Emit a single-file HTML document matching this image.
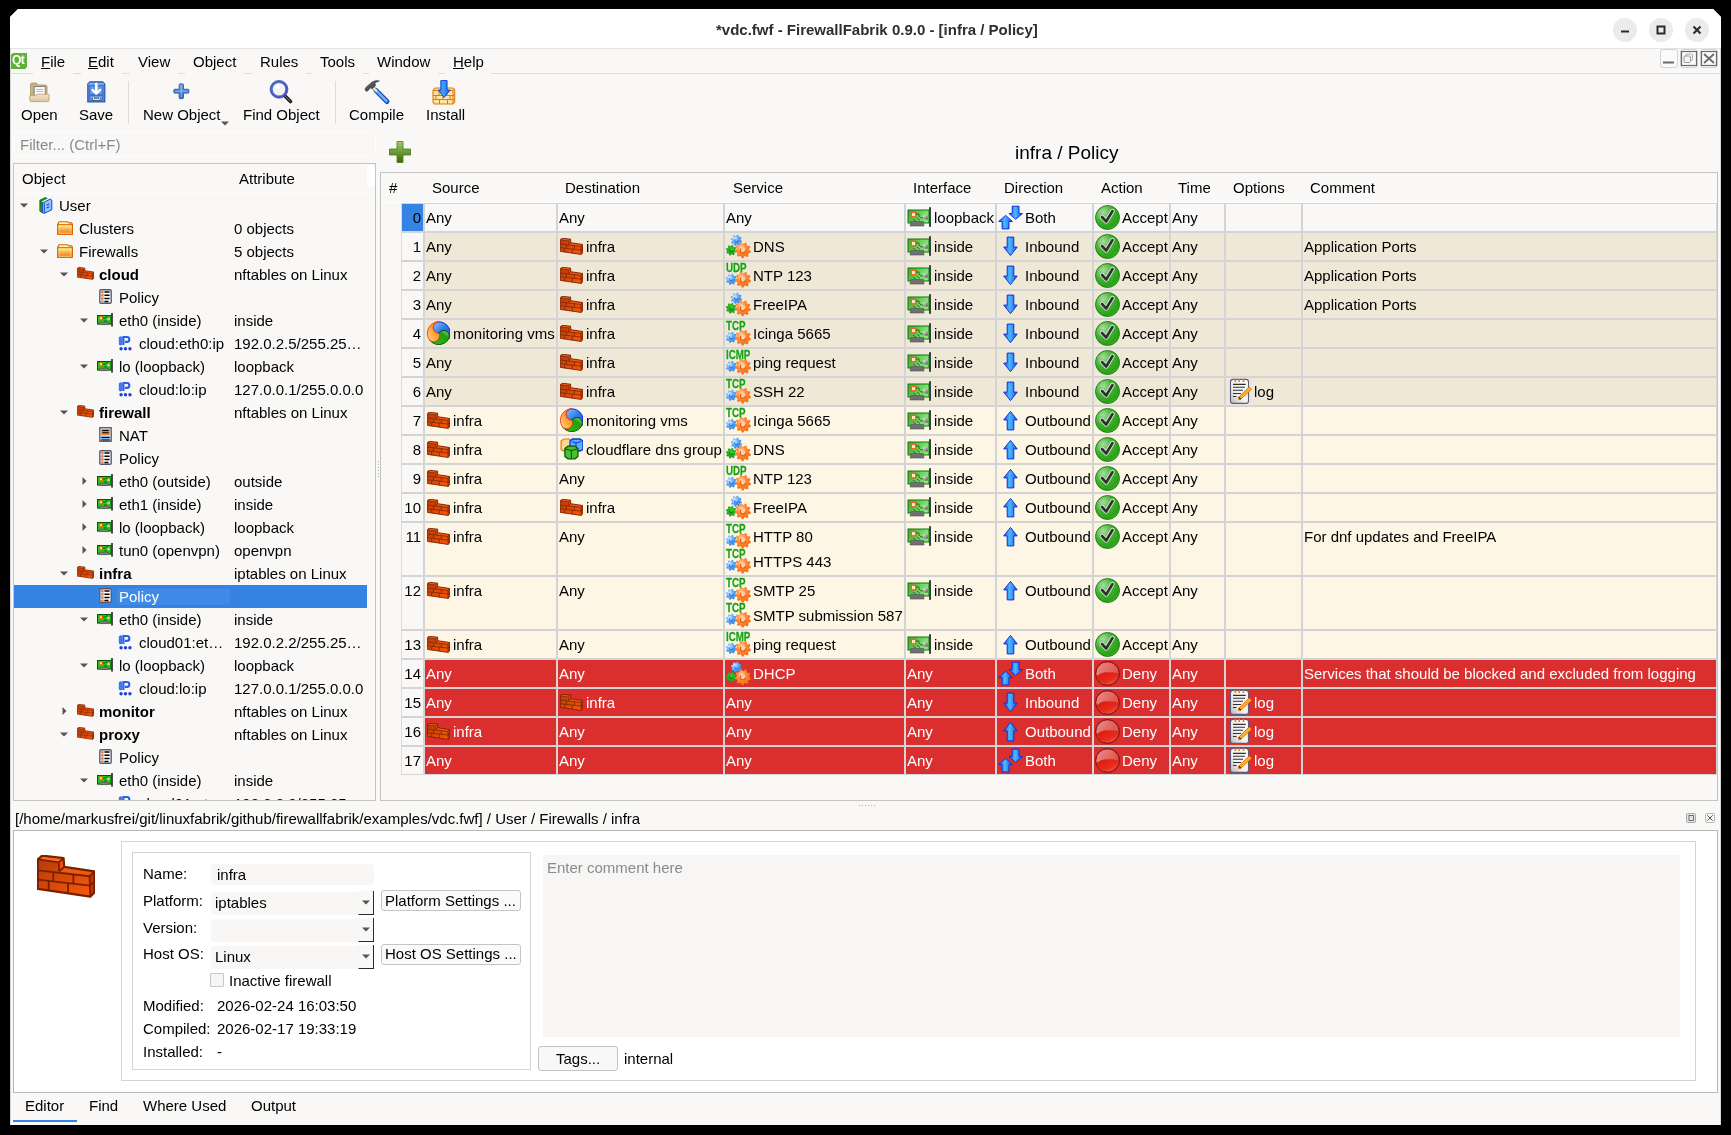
<!DOCTYPE html>
<html><head><meta charset="utf-8"><title>FirewallFabrik</title>
<style>
*{box-sizing:border-box}
html,body{margin:0;padding:0;width:1731px;height:1135px;overflow:hidden;background:#000;font-family:"Liberation Sans", sans-serif;font-size:15px;color:#000}
.a{position:absolute}
.t{position:absolute;white-space:nowrap;line-height:17px}
.b{font-weight:bold}
#win{position:absolute;left:10px;top:9px;width:1711px;height:1116px;background:#f9f8f7;clip-path:polygon(8px 0,calc(100% - 8px) 0,100% 8px,100% 100%,0 100%,0 8px)}
svg{position:absolute;overflow:visible}
</style></head>
<body>
<div id="root" style="position:absolute;left:0;top:0;width:1731px;height:1135px;will-change:transform">
<svg width="0" height="0" style="position:absolute">
<defs>
<linearGradient id="gBrick" x1="0" y1="0" x2="1" y2="1"><stop offset="0" stop-color="#b03a08"/><stop offset="1" stop-color="#ff5a08"/></linearGradient>
<linearGradient id="gGreenPlus" x1="0" y1="0" x2="0" y2="1"><stop offset="0" stop-color="#9ccc6a"/><stop offset="1" stop-color="#3a6a08"/></linearGradient>
<radialGradient id="gAccept" cx="0.32" cy="0.28" r="0.85"><stop offset="0" stop-color="#a8dca0"/><stop offset="0.45" stop-color="#42b232"/><stop offset="0.8" stop-color="#2aa018"/><stop offset="1" stop-color="#5ad040"/></radialGradient>
<linearGradient id="gDenyTop" x1="0" y1="0" x2="1" y2="0.6"><stop offset="0" stop-color="#e89090"/><stop offset="1" stop-color="#e04a40"/></linearGradient><linearGradient id="gDenyBot" x1="0" y1="0" x2="1" y2="1"><stop offset="0" stop-color="#d81810"/><stop offset="0.6" stop-color="#e82a1a"/><stop offset="1" stop-color="#ff6050"/></linearGradient>
<linearGradient id="gFolder" x1="0" y1="0" x2="0" y2="1"><stop offset="0" stop-color="#fff890"/><stop offset="0.45" stop-color="#f6b850"/><stop offset="0.8" stop-color="#f08a20"/><stop offset="1" stop-color="#f8c878"/></linearGradient>
<linearGradient id="gArrow" x1="0" y1="0" x2="1" y2="0"><stop offset="0" stop-color="#1a5ae8"/><stop offset="0.45" stop-color="#4ab8ff"/><stop offset="1" stop-color="#1a50e0"/></linearGradient>
<linearGradient id="gCard" x1="0" y1="0" x2="1" y2="0.3"><stop offset="0" stop-color="#3aa83a"/><stop offset="1" stop-color="#8ae878"/></linearGradient>
<linearGradient id="gChip" x1="0" y1="0" x2="1" y2="1"><stop offset="0" stop-color="#f0f0f0"/><stop offset="1" stop-color="#505050"/></linearGradient>
<radialGradient id="gGearO" cx="0.4" cy="0.35" r="0.7"><stop offset="0" stop-color="#ffe0c0"/><stop offset="0.4" stop-color="#ff8a3a"/><stop offset="1" stop-color="#f06a10"/></radialGradient>
<radialGradient id="gGearB" cx="0.35" cy="0.35" r="0.7"><stop offset="0" stop-color="#d8ecff"/><stop offset="0.5" stop-color="#5aaaf8"/><stop offset="1" stop-color="#2a7ae8"/></radialGradient>
<radialGradient id="gGearG" cx="0.5" cy="0.4" r="0.7"><stop offset="0" stop-color="#40d030"/><stop offset="1" stop-color="#108a10"/></radialGradient>
<linearGradient id="gSwB" x1="0" y1="0" x2="1" y2="1"><stop offset="0" stop-color="#90c0ff"/><stop offset="0.5" stop-color="#2a80e8"/><stop offset="1" stop-color="#1a50d8"/></linearGradient><linearGradient id="gSwG" x1="0" y1="1" x2="1" y2="0"><stop offset="0" stop-color="#30c010"/><stop offset="0.7" stop-color="#20a010"/><stop offset="1" stop-color="#90e080"/></linearGradient><linearGradient id="gSwO" x1="0" y1="1" x2="1" y2="0"><stop offset="0" stop-color="#ffe0a0"/><stop offset="0.5" stop-color="#ffa030"/><stop offset="1" stop-color="#ff8a20"/></linearGradient>
<linearGradient id="gLibG" x1="0" y1="0" x2="1" y2="1"><stop offset="0" stop-color="#0a7a0a"/><stop offset="1" stop-color="#40d020"/></linearGradient>
<linearGradient id="gPad" x1="1" y1="0" x2="0" y2="1"><stop offset="0" stop-color="#ffffff"/><stop offset="0.6" stop-color="#f0f0f0"/><stop offset="1" stop-color="#b8b8b8"/></linearGradient>

<symbol id="fw" viewBox="0 0 58 43">
 <path d="M0.8 4.3 L5.2 0.6 L26.6 3 L27.2 11.9 L57.3 16.4 L57.4 37.6 L53.3 41.6 L0.8 33.9 Z" fill="url(#gBrick)"/>
 <path d="M2 4.6 L5.6 1.6 L25.2 3.8 L21.6 7.4 Z" fill="#ff6a1a"/>
 <path d="M27.5 12.3 L56 16.6 L52.2 20.8 L23.5 16.5 Z" fill="#f05a10"/>
 <path d="M21.8 7.6 L26.4 3.4 L26.9 12 L22.4 16.2 Z" fill="#f05010"/>
 <path d="M52.6 21.2 L56.9 17 L57 37.3 L53 41.2 Z" fill="#c03a06"/>
 <path d="M0.8 4.3 L5.2 0.6 L26.6 3 L27.2 11.9 L57.3 16.4 L57.4 37.6 L53.3 41.6 L0.8 33.9 Z" fill="none" stroke="#7a2000" stroke-width="2.2" stroke-linejoin="round"/>
 <path d="M0.8 4.3 L21.8 7.4 L26.6 3 M21.8 7.4 L22.2 16.3 M0.8 15.3 L52.6 21.2 L57.3 16.4 M22.2 16.3 L27.2 11.9 M52.6 21.2 L53.3 41.6 M0.8 24.6 L53 30.6 L57.3 26.4 M16.3 17.2 L16.3 25.8 M36.4 19.3 L36.4 28.2 M11.7 25.8 L11.7 35.5 M31 27.5 L31 38.2" fill="none" stroke="#7a2000" stroke-width="1.8"/>
</symbol>

<symbol id="gplus" viewBox="0 0 22 22">
 <path d="M8 0.5 H14 V8 H21.5 V14 H14 V21.5 H8 V14 H0.5 V8 H8 Z" fill="url(#gGreenPlus)" stroke="#4a7a16" stroke-width="0.8"/>
</symbol>

<symbol id="accept" viewBox="0 0 25 25">
 <circle cx="12.5" cy="12.5" r="12" fill="url(#gAccept)" stroke="#1b7a10" stroke-width="0.9"/>
 <path d="M7 12 L11.2 16.5 L17.5 6" fill="none" stroke="#fff" stroke-opacity="0.75" stroke-width="4.4" stroke-linecap="round" stroke-linejoin="round"/>
 <path d="M7 12 L11.2 16.5 L17.5 6" fill="none" stroke="#303030" stroke-width="2.6" stroke-linecap="round" stroke-linejoin="round"/>
</symbol>

<symbol id="deny" viewBox="0 0 25 25">
 <circle cx="12.5" cy="12.5" r="11.9" fill="url(#gDenyTop)" stroke="#8a1818" stroke-width="1"/>
 <path d="M1.4 15.5 Q6 11 12.5 11.2 Q19 11.2 24.3 12.2 A11.9 11.9 0 0 1 1.4 15.5 Z" fill="url(#gDenyBot)"/>
 <circle cx="12.5" cy="12.5" r="11.9" fill="none" stroke="#8a1818" stroke-width="1"/>
</symbol>

<symbol id="down" viewBox="0 0 25 27">
 <path d="M10.2 4.1 H16.8 V14.1 H20.2 L13.5 22.6 L6.7 14.1 H10.2 Z" fill="url(#gArrow)" stroke="#1030d8" stroke-width="1" stroke-linejoin="round"/>
</symbol>
<symbol id="up" viewBox="0 0 25 27">
 <path d="M10.2 22.9 H16.8 V12.9 H20.2 L13.5 4.4 L6.7 12.9 H10.2 Z" fill="url(#gArrow)" stroke="#1030d8" stroke-width="1" stroke-linejoin="round"/>
</symbol>
<symbol id="both" viewBox="0 0 27 27">
 <path d="M15.2 2.2 H22 V9.5 H25.5 L18.6 15.3 L12 9.5 H15.2 Z" fill="url(#gArrow)" stroke="#1030d8" stroke-width="1" stroke-linejoin="round"/>
 <path d="M5.1 24.9 H12 V17.5 H15.4 L8.6 11.4 L1.7 17.5 H5.1 Z" fill="url(#gArrow)" stroke="#1030d8" stroke-width="1" stroke-linejoin="round"/>
</symbol>

<symbol id="iface" viewBox="0 0 26 22">
 <rect x="2" y="4" width="21" height="13" fill="url(#gCard)" stroke="#0a7a0a" stroke-width="1"/>
 <rect x="5.3" y="6.3" width="4.5" height="4.5" fill="#ffe8c0" stroke="#f06010" stroke-width="1.3"/>
 <path d="M9.8 8 H13 V10 L15 12 H17.5 M7 13 L10 15 M11 12 L14 14.5" stroke="#1a6a1a" fill="none" stroke-width="0.9"/>
 <rect x="17.3" y="9.2" width="4.5" height="4.4" fill="url(#gChip)"/>
 <path d="M5 15.5 H17.5 L18 20 H4 Z" fill="#707070" stroke="#505050" stroke-width="0.6"/>
 <rect x="23" y="1.2" width="2" height="19.6" fill="#3a4048"/>
</symbol>

<symbol id="iface_s" viewBox="0 0 16 14">
 <rect x="0.5" y="2.5" width="13.6" height="8.6" fill="#2ac212" stroke="#005800" stroke-width="1"/>
 <circle cx="4" cy="5.2" r="1.7" fill="#ffe070" stroke="#ff5a10" stroke-width="1"/>
 <path d="M5.6 5.2 H8 L9 4 H11 M7 8 H10" stroke="#0a5a0a" stroke-width="0.8" fill="none"/>
 <rect x="10.3" y="4.8" width="2.4" height="2.4" fill="#d8c0e0"/>
 <rect x="2.3" y="9.3" width="9.4" height="2.3" rx="1" fill="#808080" stroke="#444" stroke-width="0.5"/>
 <rect x="14.1" y="0" width="1.8" height="13.6" fill="#3a3a3a"/>
</symbol>
<symbol id="ip" viewBox="0 0 16 18">
 <rect x="1" y="2" width="2.8" height="9.2" rx="1.2" fill="#3a80f0" stroke="#1a40d8" stroke-width="0.7"/>
 <path d="M5.6 11.2 V2.3 H9.5 Q12.3 2.3 12.3 5 Q12.3 7.8 9.5 7.8 H7.3" fill="none" stroke="#2a60e8" stroke-width="2.4"/>
 <circle cx="3" cy="15.5" r="1.9" fill="#1a40d8"/><circle cx="8" cy="15.5" r="1.9" fill="#1a40d8"/><circle cx="13" cy="15.5" r="1.9" fill="#1a40d8"/>
</symbol>

<symbol id="policy" viewBox="0 0 12 14">
 <rect x="0.7" y="0.7" width="10.6" height="12.6" rx="1" fill="#fff" stroke="#5a5670" stroke-width="1.3"/>
 <rect x="2" y="2" width="2.5" height="10" fill="#b8dcff"/>
 <rect x="2" y="2" width="2" height="1.8" fill="#ff6a00"/><rect x="2" y="5" width="2" height="1.8" fill="#ff6a00"/><rect x="2" y="8" width="2" height="1.8" fill="#ff6a00"/><rect x="2" y="11" width="2" height="1.2" fill="#ff6a00"/>
 <path d="M5 2.8 H9.8 M5 5.8 H9.8 M5 8.8 H9.8 M5 11.6 H8.8" stroke="#000" stroke-width="1.3"/>
</symbol>
<symbol id="nat" viewBox="0 0 12 14">
 <rect x="0.7" y="0.7" width="10.6" height="12.6" fill="#fff" stroke="#5a5670" stroke-width="1.3"/>
 <rect x="2" y="2" width="8" height="5.6" fill="#f08a10"/>
 <path d="M3 3.3 H9 M3 5.3 H9" stroke="#000" stroke-width="1"/>
 <path d="M2 8.6 H10" stroke="#4aa0f0" stroke-width="1"/><path d="M2 9.8 H10 M2 12 H10" stroke="#000" stroke-width="1"/><path d="M2 11 H10" stroke="#4aa0f0" stroke-width="1"/>
</symbol>

<symbol id="folder" viewBox="0 0 16 14">
 <path d="M1 3 L2 0.8 H10.6 L11.8 1.9 H14.6 L15.4 3 V13.3 H0.6 V3 Z" fill="#fff6b0" stroke="#e06000" stroke-width="1.1" stroke-linejoin="round"/>
 <rect x="0.7" y="3.7" width="14.6" height="9.6" fill="url(#gFolder)" stroke="#e06000" stroke-width="1.1"/>
 <rect x="2" y="5" width="12" height="7.2" fill="none" stroke="#fff0b0" stroke-opacity="0.6" stroke-width="0.8"/>
</symbol>

<symbol id="lib" viewBox="0 0 14 17">
 <path d="M0.9 3.2 L6.8 0.4 L9 2.5 L9 13 L3.5 15.8 L0.9 14.2 Z" fill="url(#gLibG)" stroke="#0a6a0a" stroke-width="0.9"/>
 <path d="M2.6 4.4 L8.4 1.7 L10.6 2.6 L4.8 5.6 Z" fill="#fff"/>
 <path d="M3.6 5.9 L11.4 2 L12.8 3.2 L12.8 12.8 L5.2 16.4 L3.6 15.4 Z" fill="#8ec8f8" stroke="#1a44d0" stroke-width="1"/>
 <path d="M5.4 6.2 V16" stroke="#1a44d0" stroke-width="0.9"/>
 <path d="M7.6 8.2 L10.2 6.9 M7.6 11 L10.3 9.7" stroke="#1a44d0" stroke-width="1.1"/>
</symbol>

<symbol id="gears" viewBox="0 0 25 25">
 <path d="M14.70 6.20 L15.87 6.81 L15.47 8.34 L14.16 8.32 L13.41 9.31 L13.80 10.57 L12.44 11.37 L11.53 10.43 L10.30 10.60 L9.69 11.77 L8.16 11.37 L8.18 10.06 L7.19 9.31 L5.93 9.70 L5.13 8.34 L6.07 7.43 L5.90 6.20 L4.73 5.59 L5.13 4.06 L6.44 4.08 L7.19 3.09 L6.80 1.83 L8.16 1.03 L9.07 1.97 L10.30 1.80 L10.91 0.63 L12.44 1.03 L12.42 2.34 L13.41 3.09 L14.67 2.70 L15.47 4.06 L14.53 4.97Z" fill="url(#gGearB)"/>
 <circle cx="10.3" cy="6.2" r="1.7" fill="none" stroke="#1a5ad0" stroke-width="0.9" stroke-dasharray="6 4"/>
 <path d="M9.50 16.20 L10.57 16.79 L10.19 18.27 L8.97 18.27 L8.24 19.24 L8.58 20.41 L7.27 21.19 L6.40 20.33 L5.20 20.50 L4.61 21.57 L3.13 21.19 L3.13 19.97 L2.16 19.24 L0.99 19.58 L0.21 18.27 L1.07 17.40 L0.90 16.20 L-0.17 15.61 L0.21 14.13 L1.43 14.13 L2.16 13.16 L1.82 11.99 L3.13 11.21 L4.00 12.07 L5.20 11.90 L5.79 10.83 L7.27 11.21 L7.27 12.43 L8.24 13.16 L9.41 12.82 L10.19 14.13 L9.33 15.00Z" fill="url(#gGearG)"/>
 <circle cx="5.2" cy="16.2" r="1.6" fill="none" stroke="#0a6a0a" stroke-width="0.9" stroke-dasharray="6 4"/>
 <path d="M23.40 16.20 L24.86 16.98 L24.42 18.94 L22.76 19.01 L21.88 20.38 L22.50 21.92 L20.90 23.13 L19.59 22.12 L18.03 22.60 L17.51 24.18 L15.51 24.08 L15.15 22.46 L13.65 21.83 L12.24 22.70 L10.77 21.34 L11.54 19.87 L10.79 18.42 L9.15 18.19 L8.90 16.20 L10.43 15.57 L10.79 13.98 L9.69 12.74 L10.77 11.06 L12.35 11.56 L13.65 10.57 L13.60 8.91 L15.51 8.32 L16.40 9.72 L18.03 9.80 L19.05 8.49 L20.90 9.27 L20.68 10.91 L21.88 12.02 L23.50 11.68 L24.42 13.46 L23.20 14.58Z" fill="url(#gGearO)"/>
 <circle cx="16.9" cy="16.2" r="2.6" fill="#ffd0a0" stroke="#e85a10" stroke-width="1.1" stroke-dasharray="10 6"/>
</symbol>
<symbol id="proto" viewBox="0 0 25 25">
 <path d="M9.60 16.30 L10.67 16.90 L10.28 18.40 L9.06 18.42 L8.31 19.41 L8.64 20.59 L7.30 21.38 L6.43 20.53 L5.20 20.70 L4.60 21.77 L3.10 21.38 L3.08 20.16 L2.09 19.41 L0.91 19.74 L0.12 18.40 L0.97 17.53 L0.80 16.30 L-0.27 15.70 L0.12 14.20 L1.34 14.18 L2.09 13.19 L1.76 12.01 L3.10 11.22 L3.97 12.07 L5.20 11.90 L5.80 10.83 L7.30 11.22 L7.32 12.44 L8.31 13.19 L9.49 12.86 L10.28 14.20 L9.43 15.07Z" fill="url(#gGearB)"/>
 <circle cx="5.2" cy="16.3" r="1.7" fill="none" stroke="#1a5ad0" stroke-width="0.9" stroke-dasharray="6 4"/>
 <path d="M23.50 16.60 L24.96 17.38 L24.52 19.34 L22.86 19.41 L21.98 20.78 L22.60 22.32 L21.00 23.53 L19.69 22.52 L18.13 23.00 L17.61 24.58 L15.61 24.48 L15.25 22.86 L13.75 22.23 L12.34 23.10 L10.87 21.74 L11.64 20.27 L10.89 18.82 L9.25 18.59 L9.00 16.60 L10.53 15.97 L10.89 14.38 L9.79 13.14 L10.87 11.46 L12.45 11.96 L13.75 10.97 L13.70 9.31 L15.61 8.72 L16.50 10.12 L18.13 10.20 L19.15 8.89 L21.00 9.67 L20.78 11.31 L21.98 12.42 L23.60 12.08 L24.52 13.86 L23.30 14.98Z" fill="url(#gGearO)"/>
 <circle cx="17" cy="16.6" r="2.6" fill="#ffd0a0" stroke="#e85a10" stroke-width="1.1" stroke-dasharray="10 6"/>
</symbol>

<symbol id="swirl" viewBox="0 0 25 25">
 <path d="M13.80 1.80 A11.4 11.4 0 0 1 23.67 18.90 A5.7 5.7 0 0 0 13.80 13.20 A5.7 5.7 0 0 1 13.80 1.80 Z" fill="url(#gSwB)" stroke="#1010e8" stroke-width="0.9" stroke-linejoin="round"/>
 <path d="M23.67 18.90 A11.4 11.4 0 0 1 3.93 18.90 A5.7 5.7 0 0 0 13.80 13.20 A5.7 5.7 0 0 1 23.67 18.90 Z" fill="url(#gSwG)" stroke="#064a06" stroke-width="0.9" stroke-linejoin="round"/>
 <path d="M3.93 18.90 A11.4 11.4 0 0 1 13.80 1.80 A5.7 5.7 0 0 0 13.80 13.20 A5.7 5.7 0 0 1 3.93 18.90 Z" fill="url(#gSwO)" stroke="#f03a10" stroke-width="0.9" stroke-linejoin="round"/>
</symbol>

<symbol id="cubes" viewBox="0 0 25 25">
 <path d="M3.1 5 L6 3 H11.5 L13.3 5 V13.5 L11.5 14.9 H5 L3.1 13.5 Z" fill="#ffd890" stroke="#e07a10" stroke-width="1.2"/>
 <path d="M12 5 L14.5 3 H22 L24.9 5 V13.5 L22 15 H14.5 L12 13.5 Z" fill="#5ab0f8" stroke="#1030e0" stroke-width="1.3"/>
 <path d="M14 5.5 L18 7 L23 5.5 M18 7 V14" stroke="#1030e0" stroke-width="1" fill="none"/>
 <path d="M6.9 12.5 L10 10.1 H17 L19.9 12.5 V20.5 L17 22.8 H10 L6.9 20.5 Z" fill="#4ac030" stroke="#005a00" stroke-width="1.3"/>
 <path d="M7.5 13 L13.4 14.5 L19.5 13 M13.4 14.5 V22.5" stroke="#005a00" stroke-width="1.1" fill="none"/>
</symbol>

<symbol id="log" viewBox="0 0 26 27">
 <rect x="4.5" y="1.4" width="18" height="24" rx="2.5" fill="url(#gPad)" stroke="#5a5a7a" stroke-width="1.1"/>
 <path d="M9.4 1 V4 M13.2 1 V4 M17.5 1 V4" stroke="#f07a10" stroke-width="1.6"/>
 <path d="M7 6.4 H19.8 M7 9.3 H19 M7 12.3 H17 M7 15.5 H15 M7 18.5 H10.5" stroke="#303030" stroke-width="1.1"/>
 <path d="M12.3 19.6 L23.2 8.9 L25.6 11.3 L14.6 21.4 L12.6 21.6 Z" fill="#ffb020" stroke="#e06a08" stroke-width="0.8"/>
 <path d="M13 19.3 L14.8 21.2" stroke="#222" stroke-width="1.2"/>
</symbol>

<symbol id="tri_d" viewBox="0 0 8 5"><path d="M0 0.5 H8 L4 4.5 Z" fill="#555"/></symbol>
<symbol id="tri_r" viewBox="0 0 5 8"><path d="M0.5 0 V8 L4.5 4 Z" fill="#555"/></symbol>
</defs>
</svg>

<div id="win">
</div>
<div class="a" style="left:10px;top:9px;width:1711px;height:39px;background:#fff;clip-path:polygon(8px 0,calc(100% - 8px) 0,100% 8px,100% 100%,0 100%,0 8px)"></div>
<div class="a" style="left:10px;top:48px;width:1711px;height:1px;background:#e4e4e4"></div>
<div class="t b" style="left:716px;top:21px;color:#2e2e2e">*vdc.fwf - FirewallFabrik 0.9.0 - [infra / Policy]</div>
<div class="a" style="left:1613px;top:18px;width:24px;height:24px;border-radius:12px;background:#ebebeb"></div>
<div class="a" style="left:1649px;top:18px;width:24px;height:24px;border-radius:12px;background:#ebebeb"></div>
<div class="a" style="left:1685px;top:18px;width:24px;height:24px;border-radius:12px;background:#ebebeb"></div>
<svg style="left:1617px;top:22px" width="16" height="16"><path d="M4 9.5 H12" stroke="#2a2a2a" stroke-width="2"/></svg>
<svg style="left:1653px;top:22px" width="16" height="16"><rect x="4.5" y="4.5" width="7" height="7" fill="none" stroke="#2a2a2a" stroke-width="2"/></svg>
<svg style="left:1689px;top:22px" width="16" height="16"><path d="M4.5 4.5 L11.5 11.5 M11.5 4.5 L4.5 11.5" stroke="#2a2a2a" stroke-width="2"/></svg>
<div class="a" style="left:10px;top:48px;width:1px;height:1077px;background:#d6d6d6"></div>
<div class="a" style="left:1720px;top:48px;width:1px;height:1077px;background:#d6d6d6"></div>
<div class="a" style="left:11px;top:53px;width:16px;height:16px;background:#5fb038;clip-path:polygon(2px 0,100% 0,100% 14px,14px 100%,0 100%,0 2px)"></div>
<div class="t b" style="left:12px;top:52px;color:#fff;font-size:12px;letter-spacing:-0.5px">Qt</div>
<div class="t " style="left:41px;top:53px;"><u>F</u>ile</div>
<div class="t " style="left:88px;top:53px;"><u>E</u>dit</div>
<div class="t " style="left:138px;top:53px;">View</div>
<div class="t " style="left:193px;top:53px;">Object</div>
<div class="t " style="left:260px;top:53px;">Rules</div>
<div class="t " style="left:320px;top:53px;">Tools</div>
<div class="t " style="left:377px;top:53px;">Window</div>
<div class="t " style="left:453px;top:53px;"><u>H</u>elp</div>
<div class="a" style="left:11px;top:73px;width:1709px;height:1px;background:#dedede"></div>
<div class="a" style="left:33px;top:73px;width:40px;height:1px;background:#f9f8f7"></div>
<div class="a" style="left:81px;top:73px;width:41px;height:1px;background:#f9f8f7"></div>
<div class="a" style="left:130px;top:73px;width:48px;height:1px;background:#f9f8f7"></div>
<div class="a" style="left:185px;top:73px;width:59px;height:1px;background:#f9f8f7"></div>
<div class="a" style="left:252px;top:73px;width:54px;height:1px;background:#f9f8f7"></div>
<div class="a" style="left:312px;top:73px;width:51px;height:1px;background:#f9f8f7"></div>
<div class="a" style="left:369px;top:73px;width:69px;height:1px;background:#f9f8f7"></div>
<div class="a" style="left:445px;top:73px;width:46px;height:1px;background:#f9f8f7"></div>
<div class="a" style="left:1660px;top:49px;width:18px;height:19px;border:1px solid #d4d4d4;border-radius:3px;background:#fbfbfb"></div>
<div class="a" style="left:1680px;top:49px;width:18px;height:19px;border:1px solid #d4d4d4;border-radius:3px;background:#fbfbfb"></div>
<div class="a" style="left:1700px;top:49px;width:18px;height:19px;border:1px solid #d4d4d4;border-radius:3px;background:#fbfbfb"></div>
<svg style="left:1660px;top:49px" width="18" height="19"><path d="M3 13.5 H14" stroke="#6a6a66" stroke-width="2"/></svg>
<svg style="left:1680px;top:49px" width="18" height="19"><rect x="1.5" y="2.5" width="15" height="14" fill="none" stroke="#6a6a66" stroke-width="1.2"/><rect x="6" y="5" width="6.5" height="6.5" rx="1" fill="none" stroke="#aaa" stroke-width="1"/><rect x="4" y="7" width="6.5" height="6.5" rx="1" fill="#f4f4f4" stroke="#999" stroke-width="1"/></svg>
<svg style="left:1700px;top:49px" width="18" height="19"><rect x="1.5" y="2.5" width="15" height="14" fill="none" stroke="#6a6a66" stroke-width="1.2"/><path d="M4 5 L14 14 M14 5 L4 14" stroke="#6a6a66" stroke-width="1.8"/></svg>
<svg style="left:29px;top:82px" width="21" height="21" viewBox="0 0 21 21">
<defs><linearGradient id="gOpenF" x1="0" y1="0" x2="0" y2="1"><stop offset="0" stop-color="#f4e4cc"/><stop offset="1" stop-color="#dcc49a"/></linearGradient></defs>
<path d="M1.5 18.5 V2.5 Q1.5 1 3 1 H7.5 L9 3 H16.5 Q18 3 18 4.5 V18.5 Z" fill="#c9b084" stroke="#b39a6c" stroke-width="0.9"/>
<rect x="5.2" y="4.6" width="11" height="9" fill="#fff" stroke="#7a7a7a" stroke-width="0.9"/>
<path d="M7.2 7.4 H14.2 M7.2 9.4 H14.2" stroke="#a8b0a8" stroke-width="0.9"/>
<path d="M0.8 13.6 H6.5 L8 12.2 H19.3 Q20 12.2 20 13 V18.3 Q20 19.6 18.7 19.6 H2.2 Q0.8 19.6 0.8 18.3 Z" fill="url(#gOpenF)" stroke="#c0a070" stroke-width="0.9"/>
</svg>
<svg style="left:87px;top:81px" width="19" height="22" viewBox="0 0 19 22">
<path d="M0.8 3 L3 0.8 H15.5 L17.8 3 V20.8 H0.8 Z" fill="#5a8ad8" stroke="#2a5aae" stroke-width="1.2"/>
<path d="M1.5 2.8 H17" stroke="#a8c4f0" stroke-width="1"/>
<rect x="2.8" y="5" width="13" height="8.5" fill="#6a9ae4" stroke="#3a6ac0" stroke-width="0.8"/>
<rect x="2.8" y="14.5" width="13" height="5.2" fill="#6a9ae4" stroke="#3a6ac0" stroke-width="0.8"/>
<path d="M9.3 3 V12" stroke="#fff" stroke-width="2.6" stroke-linecap="round"/>
<path d="M5.5 9 L9.3 12.6 L13.1 9" fill="none" stroke="#fff" stroke-width="2.4" stroke-linecap="round" stroke-linejoin="round"/>
<path d="M6.3 16 V18.4 H12.3 V16" fill="none" stroke="#444" stroke-width="2"/>
<path d="M6.3 16 V18.4 H12.3 V16" fill="none" stroke="#fff" stroke-width="1"/>
</svg>
<div class="a" style="left:128px;top:81px;width:1px;height:43px;background:#dcdcdc"></div>
<svg style="left:173px;top:83px" width="17" height="17" viewBox="0 0 17 17">
<defs><linearGradient id="gBPlus" x1="0" y1="0" x2="0" y2="1"><stop offset="0" stop-color="#7aaae8"/><stop offset="1" stop-color="#3a72c0"/></linearGradient></defs>
<path d="M6.2 1.6 Q6.2 0.9 7 0.9 H9.6 Q10.4 0.9 10.4 1.6 V6.3 H15.1 Q15.8 6.3 15.8 7 V9.3 Q15.8 10.1 15.1 10.1 H10.4 V14.8 Q10.4 15.6 9.6 15.6 H7 Q6.2 15.6 6.2 14.8 V10.1 H1.6 Q0.9 10.1 0.9 9.3 V7 Q0.9 6.3 1.6 6.3 H6.2 Z" fill="url(#gBPlus)" stroke="#2a5aa0" stroke-width="1"/>
<path d="M8.3 2.5 V14 M2.5 8.2 H14" stroke="#a8c8f0" stroke-width="0.8" stroke-opacity="0.7"/>
</svg>
<svg style="left:269px;top:80px" width="24" height="24" viewBox="0 0 24 24">
<defs><linearGradient id="gLens" x1="0" y1="0" x2="1" y2="1"><stop offset="0" stop-color="#4a70d0"/><stop offset="1" stop-color="#5a50c0"/></linearGradient></defs>
<path d="M15 15 L21.5 21.5" stroke="#222" stroke-width="3.6" stroke-linecap="round"/>
<path d="M15.5 15.5 L21 21" stroke="#777" stroke-width="1" stroke-linecap="round"/>
<circle cx="10" cy="9.3" r="7.6" fill="#f2f2f4" stroke="url(#gLens)" stroke-width="2.6"/>
<circle cx="10" cy="9.3" r="8.9" fill="none" stroke="#2a48a8" stroke-width="0.7"/>
<circle cx="8.5" cy="7" r="2.2" fill="#fff"/>
</svg>
<div class="a" style="left:335px;top:81px;width:1px;height:43px;background:#dcdcdc"></div>
<svg style="left:364px;top:80px" width="26" height="24" viewBox="0 0 26 24">
<defs><linearGradient id="gHead" x1="0" y1="0" x2="1" y2="1"><stop offset="0" stop-color="#707478"/><stop offset="1" stop-color="#2a2e32"/></linearGradient></defs>
<path d="M12 10.5 L23 21.5" stroke="#1a48b8" stroke-width="5" stroke-linecap="round"/>
<path d="M12.5 11 L22.6 21.1" stroke="#6ab0f8" stroke-width="2.6" stroke-linecap="round"/>
<path d="M8.5 7 L13 11.5" stroke="#888" stroke-width="3.6"/>
<path d="M8.5 7 L13 11.5" stroke="#e8e8e8" stroke-width="2"/>
<path d="M1.2 10 Q0.6 8.6 2 7.3 L8 2 Q11.5 -0.3 15.5 0.9 Q12.5 1.6 10.8 3.6 L11.8 5.2 L8.2 8.8 L6.8 7.8 L3.3 11.2 Q1.8 11.6 1.2 10 Z" fill="url(#gHead)" stroke="#333" stroke-width="0.5"/>
</svg>
<svg style="left:432px;top:80px" width="25" height="25" viewBox="0 0 25 25">
<defs><linearGradient id="gInsA" x1="0" y1="0" x2="1" y2="0"><stop offset="0" stop-color="#1a60e8"/><stop offset="0.4" stop-color="#38a8ff"/><stop offset="1" stop-color="#1a50e0"/></linearGradient></defs>
<path d="M1 10.5 L3 8 H20.5 L22.7 10.5 V22 L21 24 H2.5 L1 22 Z" fill="#fde4a0" stroke="#e07810" stroke-width="1.1"/>
<path d="M1 10.5 H21 L22.7 8.5 M1 15.5 H22.7 M1 19.5 H22.7 M7 10.5 V15.5 M15 10.5 V15.5 M4 15.5 V19.5 M11 15.5 V19.5 M18 15.5 V19.5 M7.5 19.5 V24 M15.5 19.5 V24 M21 10.5 V24" fill="none" stroke="#e07810" stroke-width="1"/>
<path d="M8.8 0.5 H15.1 V10 H18.3 L12 17.5 L6.2 10 H8.8 Z" fill="url(#gInsA)" stroke="#1a40d0" stroke-width="0.9" stroke-linejoin="round"/>
</svg>
<div class="t " style="left:21px;top:106px;">Open</div>
<div class="t " style="left:79px;top:106px;">Save</div>
<div class="t " style="left:143px;top:106px;">New Object</div>
<svg style="left:221px;top:121px" width="8" height="5"><use href="#tri_d" width="8" height="5"/></svg>
<div class="t " style="left:243px;top:106px;">Find Object</div>
<div class="t " style="left:349px;top:106px;">Compile</div>
<div class="t " style="left:426px;top:106px;">Install</div>
<div class="a" style="left:14px;top:132px;width:362px;height:25px;border:1px solid #fefefe;border-radius:5px;background:#f9f8f7"></div>
<div class="t " style="left:20px;top:136px;color:#8a8a8a">Filter... (Ctrl+F)</div>
<div class="a" style="left:13px;top:163px;width:363px;height:638px;border:1px solid #c4c4c2;background:#f9f8f7"></div>
<div class="a" style="left:367px;top:165px;width:8px;height:22px;background:#fff;border-radius:4px"></div>
<div class="a" style="left:14px;top:193px;width:353px;height:1px;background:#fff"></div>
<div class="t " style="left:22px;top:170px;">Object</div>
<div class="t " style="left:239px;top:170px;">Attribute</div>
<div class="a" style="left:14px;top:194px;width:353px;height:606px;overflow:hidden">
<svg style="left:6px;top:9px" width="8" height="5"><use href="#tri_d" width="8" height="5"/></svg>
<svg style="left:25px;top:3px" width="14" height="17"><use href="#lib" width="14" height="17"/></svg>
<div class="t" style="left:45px;top:3px;color:#000">User</div>
<svg style="left:43px;top:27px" width="16" height="14"><use href="#folder" width="16" height="14"/></svg>
<div class="t" style="left:65px;top:26px;color:#000">Clusters</div>
<div class="t" style="left:220px;top:26px">0 objects</div>
<svg style="left:26px;top:55px" width="8" height="5"><use href="#tri_d" width="8" height="5"/></svg>
<svg style="left:43px;top:50px" width="16" height="14"><use href="#folder" width="16" height="14"/></svg>
<div class="t" style="left:65px;top:49px;color:#000">Firewalls</div>
<div class="t" style="left:220px;top:49px">5 objects</div>
<svg style="left:46px;top:78px" width="8" height="5"><use href="#tri_d" width="8" height="5"/></svg>
<svg style="left:63px;top:73px" width="17" height="13"><use href="#fw" width="17" height="13"/></svg>
<div class="t b" style="left:85px;top:72px;color:#000">cloud</div>
<div class="t" style="left:220px;top:72px">nftables on Linux</div>
<svg style="left:85px;top:95px" width="13" height="15"><use href="#policy" width="13" height="15"/></svg>
<div class="t" style="left:105px;top:95px;color:#000">Policy</div>
<svg style="left:66px;top:124px" width="8" height="5"><use href="#tri_d" width="8" height="5"/></svg>
<svg style="left:83px;top:119px" width="16" height="14"><use href="#iface_s" width="16" height="14"/></svg>
<div class="t" style="left:105px;top:118px;color:#000">eth0 (inside)</div>
<div class="t" style="left:220px;top:118px">inside</div>
<svg style="left:104px;top:141px" width="15" height="16"><use href="#ip" width="15" height="16"/></svg>
<div class="t" style="left:125px;top:141px;color:#000">cloud:eth0:ip</div>
<div class="t" style="left:220px;top:141px">192.0.2.5/255.25…</div>
<svg style="left:66px;top:170px" width="8" height="5"><use href="#tri_d" width="8" height="5"/></svg>
<svg style="left:83px;top:165px" width="16" height="14"><use href="#iface_s" width="16" height="14"/></svg>
<div class="t" style="left:105px;top:164px;color:#000">lo (loopback)</div>
<div class="t" style="left:220px;top:164px">loopback</div>
<svg style="left:104px;top:187px" width="15" height="16"><use href="#ip" width="15" height="16"/></svg>
<div class="t" style="left:125px;top:187px;color:#000">cloud:lo:ip</div>
<div class="t" style="left:220px;top:187px">127.0.0.1/255.0.0.0</div>
<svg style="left:46px;top:216px" width="8" height="5"><use href="#tri_d" width="8" height="5"/></svg>
<svg style="left:63px;top:211px" width="17" height="13"><use href="#fw" width="17" height="13"/></svg>
<div class="t b" style="left:85px;top:210px;color:#000">firewall</div>
<div class="t" style="left:220px;top:210px">nftables on Linux</div>
<svg style="left:85px;top:233px" width="13" height="15"><use href="#nat" width="13" height="15"/></svg>
<div class="t" style="left:105px;top:233px;color:#000">NAT</div>
<svg style="left:85px;top:256px" width="13" height="15"><use href="#policy" width="13" height="15"/></svg>
<div class="t" style="left:105px;top:256px;color:#000">Policy</div>
<svg style="left:68px;top:283px" width="5" height="8"><use href="#tri_r" width="5" height="8"/></svg>
<svg style="left:83px;top:280px" width="16" height="14"><use href="#iface_s" width="16" height="14"/></svg>
<div class="t" style="left:105px;top:279px;color:#000">eth0 (outside)</div>
<div class="t" style="left:220px;top:279px">outside</div>
<svg style="left:68px;top:306px" width="5" height="8"><use href="#tri_r" width="5" height="8"/></svg>
<svg style="left:83px;top:303px" width="16" height="14"><use href="#iface_s" width="16" height="14"/></svg>
<div class="t" style="left:105px;top:302px;color:#000">eth1 (inside)</div>
<div class="t" style="left:220px;top:302px">inside</div>
<svg style="left:68px;top:329px" width="5" height="8"><use href="#tri_r" width="5" height="8"/></svg>
<svg style="left:83px;top:326px" width="16" height="14"><use href="#iface_s" width="16" height="14"/></svg>
<div class="t" style="left:105px;top:325px;color:#000">lo (loopback)</div>
<div class="t" style="left:220px;top:325px">loopback</div>
<svg style="left:68px;top:352px" width="5" height="8"><use href="#tri_r" width="5" height="8"/></svg>
<svg style="left:83px;top:349px" width="16" height="14"><use href="#iface_s" width="16" height="14"/></svg>
<div class="t" style="left:105px;top:348px;color:#000">tun0 (openvpn)</div>
<div class="t" style="left:220px;top:348px">openvpn</div>
<svg style="left:46px;top:377px" width="8" height="5"><use href="#tri_d" width="8" height="5"/></svg>
<svg style="left:63px;top:372px" width="17" height="13"><use href="#fw" width="17" height="13"/></svg>
<div class="t b" style="left:85px;top:371px;color:#000">infra</div>
<div class="t" style="left:220px;top:371px">iptables on Linux</div>
<div class="a" style="left:0px;top:391px;width:353px;height:23px;background:#3584e4"></div>
<div class="a" style="left:102px;top:393px;width:115px;height:19px;background:#3f8ae6;border:1px solid #3a80d8;border-radius:3px"></div>
<svg style="left:85px;top:394px" width="13" height="15"><use href="#policy" width="13" height="15"/></svg>
<div class="t" style="left:105px;top:394px;color:#fff">Policy</div>
<svg style="left:66px;top:423px" width="8" height="5"><use href="#tri_d" width="8" height="5"/></svg>
<svg style="left:83px;top:418px" width="16" height="14"><use href="#iface_s" width="16" height="14"/></svg>
<div class="t" style="left:105px;top:417px;color:#000">eth0 (inside)</div>
<div class="t" style="left:220px;top:417px">inside</div>
<svg style="left:104px;top:440px" width="15" height="16"><use href="#ip" width="15" height="16"/></svg>
<div class="t" style="left:125px;top:440px;color:#000">cloud01:et…</div>
<div class="t" style="left:220px;top:440px">192.0.2.2/255.25…</div>
<svg style="left:66px;top:469px" width="8" height="5"><use href="#tri_d" width="8" height="5"/></svg>
<svg style="left:83px;top:464px" width="16" height="14"><use href="#iface_s" width="16" height="14"/></svg>
<div class="t" style="left:105px;top:463px;color:#000">lo (loopback)</div>
<div class="t" style="left:220px;top:463px">loopback</div>
<svg style="left:104px;top:486px" width="15" height="16"><use href="#ip" width="15" height="16"/></svg>
<div class="t" style="left:125px;top:486px;color:#000">cloud:lo:ip</div>
<div class="t" style="left:220px;top:486px">127.0.0.1/255.0.0.0</div>
<svg style="left:48px;top:513px" width="5" height="8"><use href="#tri_r" width="5" height="8"/></svg>
<svg style="left:63px;top:510px" width="17" height="13"><use href="#fw" width="17" height="13"/></svg>
<div class="t b" style="left:85px;top:509px;color:#000">monitor</div>
<div class="t" style="left:220px;top:509px">nftables on Linux</div>
<svg style="left:46px;top:538px" width="8" height="5"><use href="#tri_d" width="8" height="5"/></svg>
<svg style="left:63px;top:533px" width="17" height="13"><use href="#fw" width="17" height="13"/></svg>
<div class="t b" style="left:85px;top:532px;color:#000">proxy</div>
<div class="t" style="left:220px;top:532px">nftables on Linux</div>
<svg style="left:85px;top:555px" width="13" height="15"><use href="#policy" width="13" height="15"/></svg>
<div class="t" style="left:105px;top:555px;color:#000">Policy</div>
<svg style="left:66px;top:584px" width="8" height="5"><use href="#tri_d" width="8" height="5"/></svg>
<svg style="left:83px;top:579px" width="16" height="14"><use href="#iface_s" width="16" height="14"/></svg>
<div class="t" style="left:105px;top:578px;color:#000">eth0 (inside)</div>
<div class="t" style="left:220px;top:578px">inside</div>
<svg style="left:104px;top:601px" width="15" height="16"><use href="#ip" width="15" height="16"/></svg>
<div class="t" style="left:125px;top:601px;color:#000">cloud01:et…</div>
<div class="t" style="left:220px;top:601px">192.0.2.3/255.25…</div>
</div>
<svg style="left:389px;top:141px" width="22" height="22"><use href="#gplus" width="22" height="22"/></svg>
<div class="t " style="left:1015px;top:143px;font-size:19px;line-height:20px">infra / Policy</div>
<div class="a" style="left:380px;top:172px;width:1338px;height:629px;border:1px solid #c4c4c2;background:#f9f8f7"></div>
<div class="a" style="left:381px;top:202px;width:1336px;height:1px;background:#fff"></div>
<div class="t " style="left:389px;top:179px;">#</div>
<div class="t " style="left:432px;top:179px;">Source</div>
<div class="t " style="left:565px;top:179px;">Destination</div>
<div class="t " style="left:733px;top:179px;">Service</div>
<div class="t " style="left:913px;top:179px;">Interface</div>
<div class="t " style="left:1004px;top:179px;">Direction</div>
<div class="t " style="left:1101px;top:179px;">Action</div>
<div class="t " style="left:1178px;top:179px;">Time</div>
<div class="t " style="left:1233px;top:179px;">Options</div>
<div class="t " style="left:1310px;top:179px;">Comment</div>
<div class="a" style="left:381px;top:173px;width:1336px;height:627px;overflow:hidden">
<div class="a" style="left:20px;top:31px;width:22px;height:27px;background:#f9f8f7;border-left:1px solid #dcdcdc"></div>
<div class="a" style="left:21px;top:31px;width:21px;height:27px;background:#3584e4"></div>
<div class="a" style="left:20px;top:30px;width:1316px;height:1px;background:#d4d4d4"></div>
<div class="a" style="left:44px;top:31px;width:1291px;height:27px;background:#f9f8f7"></div>
<div class="a" style="left:42px;top:31px;width:2px;height:27px;background:#d4d4d4"></div>
<div class="a" style="left:175px;top:31px;width:2px;height:27px;background:#d4d4d4"></div>
<div class="a" style="left:342px;top:31px;width:2px;height:27px;background:#d4d4d4"></div>
<div class="a" style="left:523px;top:31px;width:2px;height:27px;background:#d4d4d4"></div>
<div class="a" style="left:614px;top:31px;width:2px;height:27px;background:#d4d4d4"></div>
<div class="a" style="left:711px;top:31px;width:2px;height:27px;background:#d4d4d4"></div>
<div class="a" style="left:788px;top:31px;width:2px;height:27px;background:#d4d4d4"></div>
<div class="a" style="left:843px;top:31px;width:2px;height:27px;background:#d4d4d4"></div>
<div class="a" style="left:920px;top:31px;width:2px;height:27px;background:#d4d4d4"></div>
<div class="a" style="left:1335px;top:31px;width:1px;height:27px;background:#d4d4d4"></div>
<div class="t" style="left:21px;top:36px;width:19px;text-align:right;color:#000">0</div>
<div class="t" style="left:45px;top:36px;color:#000">Any</div>
<div class="t" style="left:178px;top:36px;color:#000">Any</div>
<div class="t" style="left:345px;top:36px;color:#000">Any</div>
<svg style="left:525px;top:33px" width="26" height="22"><use href="#iface" width="26" height="22"/></svg>
<div class="t" style="left:553px;top:36px;color:#000">loopback</div>
<svg style="left:616px;top:31px" width="27" height="27"><use href="#both" width="27" height="27"/></svg>
<div class="t" style="left:644px;top:36px;color:#000">Both</div>
<svg style="left:714px;top:32px" width="25" height="25"><use href="#accept" width="25" height="25"/></svg>
<div class="t" style="left:741px;top:36px;color:#000">Accept</div>
<div class="t" style="left:791px;top:36px;color:#000">Any</div>
<div class="a" style="left:20px;top:60px;width:22px;height:27px;background:#f9f8f7;border-left:1px solid #dcdcdc"></div>
<div class="a" style="left:20px;top:58px;width:1316px;height:2px;background:#d4d4d4"></div>
<div class="a" style="left:44px;top:60px;width:1291px;height:27px;background:#efe8d7"></div>
<div class="a" style="left:42px;top:60px;width:2px;height:27px;background:#d4d4d4"></div>
<div class="a" style="left:175px;top:60px;width:2px;height:27px;background:#d4d4d4"></div>
<div class="a" style="left:342px;top:60px;width:2px;height:27px;background:#d4d4d4"></div>
<div class="a" style="left:523px;top:60px;width:2px;height:27px;background:#d4d4d4"></div>
<div class="a" style="left:614px;top:60px;width:2px;height:27px;background:#d4d4d4"></div>
<div class="a" style="left:711px;top:60px;width:2px;height:27px;background:#d4d4d4"></div>
<div class="a" style="left:788px;top:60px;width:2px;height:27px;background:#d4d4d4"></div>
<div class="a" style="left:843px;top:60px;width:2px;height:27px;background:#d4d4d4"></div>
<div class="a" style="left:920px;top:60px;width:2px;height:27px;background:#d4d4d4"></div>
<div class="a" style="left:1335px;top:60px;width:1px;height:27px;background:#d4d4d4"></div>
<div class="t" style="left:21px;top:65px;width:19px;text-align:right;color:#000">1</div>
<div class="t" style="left:45px;top:65px;color:#000">Any</div>
<svg style="left:179px;top:65px" width="23" height="17"><use href="#fw" width="23" height="17"/></svg>
<div class="t" style="left:205px;top:65px;color:#000">infra</div>
<svg style="left:345px;top:61px" width="25" height="25"><use href="#gears" width="25" height="25"/></svg>
<div class="t" style="left:372px;top:65px;color:#000">DNS</div>
<svg style="left:525px;top:62px" width="26" height="22"><use href="#iface" width="26" height="22"/></svg>
<div class="t" style="left:553px;top:65px;color:#000">inside</div>
<svg style="left:616px;top:60px" width="25" height="27"><use href="#down" width="25" height="27"/></svg>
<div class="t" style="left:644px;top:65px;color:#000">Inbound</div>
<svg style="left:714px;top:61px" width="25" height="25"><use href="#accept" width="25" height="25"/></svg>
<div class="t" style="left:741px;top:65px;color:#000">Accept</div>
<div class="t" style="left:791px;top:65px;color:#000">Any</div>
<div class="t" style="left:923px;top:65px;color:#000">Application Ports</div>
<div class="a" style="left:20px;top:89px;width:22px;height:27px;background:#f9f8f7;border-left:1px solid #dcdcdc"></div>
<div class="a" style="left:20px;top:87px;width:1316px;height:2px;background:#d4d4d4"></div>
<div class="a" style="left:44px;top:89px;width:1291px;height:27px;background:#efe8d7"></div>
<div class="a" style="left:42px;top:89px;width:2px;height:27px;background:#d4d4d4"></div>
<div class="a" style="left:175px;top:89px;width:2px;height:27px;background:#d4d4d4"></div>
<div class="a" style="left:342px;top:89px;width:2px;height:27px;background:#d4d4d4"></div>
<div class="a" style="left:523px;top:89px;width:2px;height:27px;background:#d4d4d4"></div>
<div class="a" style="left:614px;top:89px;width:2px;height:27px;background:#d4d4d4"></div>
<div class="a" style="left:711px;top:89px;width:2px;height:27px;background:#d4d4d4"></div>
<div class="a" style="left:788px;top:89px;width:2px;height:27px;background:#d4d4d4"></div>
<div class="a" style="left:843px;top:89px;width:2px;height:27px;background:#d4d4d4"></div>
<div class="a" style="left:920px;top:89px;width:2px;height:27px;background:#d4d4d4"></div>
<div class="a" style="left:1335px;top:89px;width:1px;height:27px;background:#d4d4d4"></div>
<div class="t" style="left:21px;top:94px;width:19px;text-align:right;color:#000">2</div>
<div class="t" style="left:45px;top:94px;color:#000">Any</div>
<svg style="left:179px;top:94px" width="23" height="17"><use href="#fw" width="23" height="17"/></svg>
<div class="t" style="left:205px;top:94px;color:#000">infra</div>
<svg style="left:345px;top:90px" width="25" height="25"><use href="#proto" width="25" height="25"/></svg>
<div class="t b" style="left:345px;top:89px;font-size:12.5px;line-height:12px;color:#18a010;transform:scaleX(0.78);transform-origin:0 0;-webkit-text-stroke:0.3px #18a010;text-shadow:0 0 1px #fff,0 0 1px #fff">UDP</div>
<div class="t" style="left:372px;top:94px;color:#000">NTP 123</div>
<svg style="left:525px;top:91px" width="26" height="22"><use href="#iface" width="26" height="22"/></svg>
<div class="t" style="left:553px;top:94px;color:#000">inside</div>
<svg style="left:616px;top:89px" width="25" height="27"><use href="#down" width="25" height="27"/></svg>
<div class="t" style="left:644px;top:94px;color:#000">Inbound</div>
<svg style="left:714px;top:90px" width="25" height="25"><use href="#accept" width="25" height="25"/></svg>
<div class="t" style="left:741px;top:94px;color:#000">Accept</div>
<div class="t" style="left:791px;top:94px;color:#000">Any</div>
<div class="t" style="left:923px;top:94px;color:#000">Application Ports</div>
<div class="a" style="left:20px;top:118px;width:22px;height:27px;background:#f9f8f7;border-left:1px solid #dcdcdc"></div>
<div class="a" style="left:20px;top:116px;width:1316px;height:2px;background:#d4d4d4"></div>
<div class="a" style="left:44px;top:118px;width:1291px;height:27px;background:#efe8d7"></div>
<div class="a" style="left:42px;top:118px;width:2px;height:27px;background:#d4d4d4"></div>
<div class="a" style="left:175px;top:118px;width:2px;height:27px;background:#d4d4d4"></div>
<div class="a" style="left:342px;top:118px;width:2px;height:27px;background:#d4d4d4"></div>
<div class="a" style="left:523px;top:118px;width:2px;height:27px;background:#d4d4d4"></div>
<div class="a" style="left:614px;top:118px;width:2px;height:27px;background:#d4d4d4"></div>
<div class="a" style="left:711px;top:118px;width:2px;height:27px;background:#d4d4d4"></div>
<div class="a" style="left:788px;top:118px;width:2px;height:27px;background:#d4d4d4"></div>
<div class="a" style="left:843px;top:118px;width:2px;height:27px;background:#d4d4d4"></div>
<div class="a" style="left:920px;top:118px;width:2px;height:27px;background:#d4d4d4"></div>
<div class="a" style="left:1335px;top:118px;width:1px;height:27px;background:#d4d4d4"></div>
<div class="t" style="left:21px;top:123px;width:19px;text-align:right;color:#000">3</div>
<div class="t" style="left:45px;top:123px;color:#000">Any</div>
<svg style="left:179px;top:123px" width="23" height="17"><use href="#fw" width="23" height="17"/></svg>
<div class="t" style="left:205px;top:123px;color:#000">infra</div>
<svg style="left:345px;top:119px" width="25" height="25"><use href="#gears" width="25" height="25"/></svg>
<div class="t" style="left:372px;top:123px;color:#000">FreeIPA</div>
<svg style="left:525px;top:120px" width="26" height="22"><use href="#iface" width="26" height="22"/></svg>
<div class="t" style="left:553px;top:123px;color:#000">inside</div>
<svg style="left:616px;top:118px" width="25" height="27"><use href="#down" width="25" height="27"/></svg>
<div class="t" style="left:644px;top:123px;color:#000">Inbound</div>
<svg style="left:714px;top:119px" width="25" height="25"><use href="#accept" width="25" height="25"/></svg>
<div class="t" style="left:741px;top:123px;color:#000">Accept</div>
<div class="t" style="left:791px;top:123px;color:#000">Any</div>
<div class="t" style="left:923px;top:123px;color:#000">Application Ports</div>
<div class="a" style="left:20px;top:147px;width:22px;height:27px;background:#f9f8f7;border-left:1px solid #dcdcdc"></div>
<div class="a" style="left:20px;top:145px;width:1316px;height:2px;background:#d4d4d4"></div>
<div class="a" style="left:44px;top:147px;width:1291px;height:27px;background:#efe8d7"></div>
<div class="a" style="left:42px;top:147px;width:2px;height:27px;background:#d4d4d4"></div>
<div class="a" style="left:175px;top:147px;width:2px;height:27px;background:#d4d4d4"></div>
<div class="a" style="left:342px;top:147px;width:2px;height:27px;background:#d4d4d4"></div>
<div class="a" style="left:523px;top:147px;width:2px;height:27px;background:#d4d4d4"></div>
<div class="a" style="left:614px;top:147px;width:2px;height:27px;background:#d4d4d4"></div>
<div class="a" style="left:711px;top:147px;width:2px;height:27px;background:#d4d4d4"></div>
<div class="a" style="left:788px;top:147px;width:2px;height:27px;background:#d4d4d4"></div>
<div class="a" style="left:843px;top:147px;width:2px;height:27px;background:#d4d4d4"></div>
<div class="a" style="left:920px;top:147px;width:2px;height:27px;background:#d4d4d4"></div>
<div class="a" style="left:1335px;top:147px;width:1px;height:27px;background:#d4d4d4"></div>
<div class="t" style="left:21px;top:152px;width:19px;text-align:right;color:#000">4</div>
<svg style="left:44px;top:147px" width="25" height="25"><use href="#swirl" width="25" height="25"/></svg>
<div class="t" style="left:72px;top:152px;color:#000">monitoring vms</div>
<svg style="left:179px;top:152px" width="23" height="17"><use href="#fw" width="23" height="17"/></svg>
<div class="t" style="left:205px;top:152px;color:#000">infra</div>
<svg style="left:345px;top:148px" width="25" height="25"><use href="#proto" width="25" height="25"/></svg>
<div class="t b" style="left:345px;top:147px;font-size:12.5px;line-height:12px;color:#18a010;transform:scaleX(0.78);transform-origin:0 0;-webkit-text-stroke:0.3px #18a010;text-shadow:0 0 1px #fff,0 0 1px #fff">TCP</div>
<div class="t" style="left:372px;top:152px;color:#000">Icinga 5665</div>
<svg style="left:525px;top:149px" width="26" height="22"><use href="#iface" width="26" height="22"/></svg>
<div class="t" style="left:553px;top:152px;color:#000">inside</div>
<svg style="left:616px;top:147px" width="25" height="27"><use href="#down" width="25" height="27"/></svg>
<div class="t" style="left:644px;top:152px;color:#000">Inbound</div>
<svg style="left:714px;top:148px" width="25" height="25"><use href="#accept" width="25" height="25"/></svg>
<div class="t" style="left:741px;top:152px;color:#000">Accept</div>
<div class="t" style="left:791px;top:152px;color:#000">Any</div>
<div class="a" style="left:20px;top:176px;width:22px;height:27px;background:#f9f8f7;border-left:1px solid #dcdcdc"></div>
<div class="a" style="left:20px;top:174px;width:1316px;height:2px;background:#d4d4d4"></div>
<div class="a" style="left:44px;top:176px;width:1291px;height:27px;background:#efe8d7"></div>
<div class="a" style="left:42px;top:176px;width:2px;height:27px;background:#d4d4d4"></div>
<div class="a" style="left:175px;top:176px;width:2px;height:27px;background:#d4d4d4"></div>
<div class="a" style="left:342px;top:176px;width:2px;height:27px;background:#d4d4d4"></div>
<div class="a" style="left:523px;top:176px;width:2px;height:27px;background:#d4d4d4"></div>
<div class="a" style="left:614px;top:176px;width:2px;height:27px;background:#d4d4d4"></div>
<div class="a" style="left:711px;top:176px;width:2px;height:27px;background:#d4d4d4"></div>
<div class="a" style="left:788px;top:176px;width:2px;height:27px;background:#d4d4d4"></div>
<div class="a" style="left:843px;top:176px;width:2px;height:27px;background:#d4d4d4"></div>
<div class="a" style="left:920px;top:176px;width:2px;height:27px;background:#d4d4d4"></div>
<div class="a" style="left:1335px;top:176px;width:1px;height:27px;background:#d4d4d4"></div>
<div class="t" style="left:21px;top:181px;width:19px;text-align:right;color:#000">5</div>
<div class="t" style="left:45px;top:181px;color:#000">Any</div>
<svg style="left:179px;top:181px" width="23" height="17"><use href="#fw" width="23" height="17"/></svg>
<div class="t" style="left:205px;top:181px;color:#000">infra</div>
<svg style="left:345px;top:177px" width="25" height="25"><use href="#proto" width="25" height="25"/></svg>
<div class="t b" style="left:345px;top:176px;font-size:12.5px;line-height:12px;color:#18a010;transform:scaleX(0.78);transform-origin:0 0;-webkit-text-stroke:0.3px #18a010;text-shadow:0 0 1px #fff,0 0 1px #fff">ICMP</div>
<div class="t" style="left:372px;top:181px;color:#000">ping request</div>
<svg style="left:525px;top:178px" width="26" height="22"><use href="#iface" width="26" height="22"/></svg>
<div class="t" style="left:553px;top:181px;color:#000">inside</div>
<svg style="left:616px;top:176px" width="25" height="27"><use href="#down" width="25" height="27"/></svg>
<div class="t" style="left:644px;top:181px;color:#000">Inbound</div>
<svg style="left:714px;top:177px" width="25" height="25"><use href="#accept" width="25" height="25"/></svg>
<div class="t" style="left:741px;top:181px;color:#000">Accept</div>
<div class="t" style="left:791px;top:181px;color:#000">Any</div>
<div class="a" style="left:20px;top:205px;width:22px;height:27px;background:#f9f8f7;border-left:1px solid #dcdcdc"></div>
<div class="a" style="left:20px;top:203px;width:1316px;height:2px;background:#d4d4d4"></div>
<div class="a" style="left:44px;top:205px;width:1291px;height:27px;background:#efe8d7"></div>
<div class="a" style="left:42px;top:205px;width:2px;height:27px;background:#d4d4d4"></div>
<div class="a" style="left:175px;top:205px;width:2px;height:27px;background:#d4d4d4"></div>
<div class="a" style="left:342px;top:205px;width:2px;height:27px;background:#d4d4d4"></div>
<div class="a" style="left:523px;top:205px;width:2px;height:27px;background:#d4d4d4"></div>
<div class="a" style="left:614px;top:205px;width:2px;height:27px;background:#d4d4d4"></div>
<div class="a" style="left:711px;top:205px;width:2px;height:27px;background:#d4d4d4"></div>
<div class="a" style="left:788px;top:205px;width:2px;height:27px;background:#d4d4d4"></div>
<div class="a" style="left:843px;top:205px;width:2px;height:27px;background:#d4d4d4"></div>
<div class="a" style="left:920px;top:205px;width:2px;height:27px;background:#d4d4d4"></div>
<div class="a" style="left:1335px;top:205px;width:1px;height:27px;background:#d4d4d4"></div>
<div class="t" style="left:21px;top:210px;width:19px;text-align:right;color:#000">6</div>
<div class="t" style="left:45px;top:210px;color:#000">Any</div>
<svg style="left:179px;top:210px" width="23" height="17"><use href="#fw" width="23" height="17"/></svg>
<div class="t" style="left:205px;top:210px;color:#000">infra</div>
<svg style="left:345px;top:206px" width="25" height="25"><use href="#proto" width="25" height="25"/></svg>
<div class="t b" style="left:345px;top:205px;font-size:12.5px;line-height:12px;color:#18a010;transform:scaleX(0.78);transform-origin:0 0;-webkit-text-stroke:0.3px #18a010;text-shadow:0 0 1px #fff,0 0 1px #fff">TCP</div>
<div class="t" style="left:372px;top:210px;color:#000">SSH 22</div>
<svg style="left:525px;top:207px" width="26" height="22"><use href="#iface" width="26" height="22"/></svg>
<div class="t" style="left:553px;top:210px;color:#000">inside</div>
<svg style="left:616px;top:205px" width="25" height="27"><use href="#down" width="25" height="27"/></svg>
<div class="t" style="left:644px;top:210px;color:#000">Inbound</div>
<svg style="left:714px;top:206px" width="25" height="25"><use href="#accept" width="25" height="25"/></svg>
<div class="t" style="left:741px;top:210px;color:#000">Accept</div>
<div class="t" style="left:791px;top:210px;color:#000">Any</div>
<svg style="left:845px;top:205px" width="26" height="27"><use href="#log" width="26" height="27"/></svg>
<div class="t" style="left:873px;top:210px;color:#000">log</div>
<div class="a" style="left:20px;top:234px;width:22px;height:27px;background:#f9f8f7;border-left:1px solid #dcdcdc"></div>
<div class="a" style="left:20px;top:232px;width:1316px;height:2px;background:#d4d4d4"></div>
<div class="a" style="left:44px;top:234px;width:1291px;height:27px;background:#fdf6e5"></div>
<div class="a" style="left:42px;top:234px;width:2px;height:27px;background:#d4d4d4"></div>
<div class="a" style="left:175px;top:234px;width:2px;height:27px;background:#d4d4d4"></div>
<div class="a" style="left:342px;top:234px;width:2px;height:27px;background:#d4d4d4"></div>
<div class="a" style="left:523px;top:234px;width:2px;height:27px;background:#d4d4d4"></div>
<div class="a" style="left:614px;top:234px;width:2px;height:27px;background:#d4d4d4"></div>
<div class="a" style="left:711px;top:234px;width:2px;height:27px;background:#d4d4d4"></div>
<div class="a" style="left:788px;top:234px;width:2px;height:27px;background:#d4d4d4"></div>
<div class="a" style="left:843px;top:234px;width:2px;height:27px;background:#d4d4d4"></div>
<div class="a" style="left:920px;top:234px;width:2px;height:27px;background:#d4d4d4"></div>
<div class="a" style="left:1335px;top:234px;width:1px;height:27px;background:#d4d4d4"></div>
<div class="t" style="left:21px;top:239px;width:19px;text-align:right;color:#000">7</div>
<svg style="left:46px;top:239px" width="23" height="17"><use href="#fw" width="23" height="17"/></svg>
<div class="t" style="left:72px;top:239px;color:#000">infra</div>
<svg style="left:177px;top:234px" width="25" height="25"><use href="#swirl" width="25" height="25"/></svg>
<div class="t" style="left:205px;top:239px;color:#000">monitoring vms</div>
<svg style="left:345px;top:235px" width="25" height="25"><use href="#proto" width="25" height="25"/></svg>
<div class="t b" style="left:345px;top:234px;font-size:12.5px;line-height:12px;color:#18a010;transform:scaleX(0.78);transform-origin:0 0;-webkit-text-stroke:0.3px #18a010;text-shadow:0 0 1px #fff,0 0 1px #fff">TCP</div>
<div class="t" style="left:372px;top:239px;color:#000">Icinga 5665</div>
<svg style="left:525px;top:236px" width="26" height="22"><use href="#iface" width="26" height="22"/></svg>
<div class="t" style="left:553px;top:239px;color:#000">inside</div>
<svg style="left:616px;top:234px" width="25" height="27"><use href="#up" width="25" height="27"/></svg>
<div class="t" style="left:644px;top:239px;color:#000">Outbound</div>
<svg style="left:714px;top:235px" width="25" height="25"><use href="#accept" width="25" height="25"/></svg>
<div class="t" style="left:741px;top:239px;color:#000">Accept</div>
<div class="t" style="left:791px;top:239px;color:#000">Any</div>
<div class="a" style="left:20px;top:263px;width:22px;height:27px;background:#f9f8f7;border-left:1px solid #dcdcdc"></div>
<div class="a" style="left:20px;top:261px;width:1316px;height:2px;background:#d4d4d4"></div>
<div class="a" style="left:44px;top:263px;width:1291px;height:27px;background:#fdf6e5"></div>
<div class="a" style="left:42px;top:263px;width:2px;height:27px;background:#d4d4d4"></div>
<div class="a" style="left:175px;top:263px;width:2px;height:27px;background:#d4d4d4"></div>
<div class="a" style="left:342px;top:263px;width:2px;height:27px;background:#d4d4d4"></div>
<div class="a" style="left:523px;top:263px;width:2px;height:27px;background:#d4d4d4"></div>
<div class="a" style="left:614px;top:263px;width:2px;height:27px;background:#d4d4d4"></div>
<div class="a" style="left:711px;top:263px;width:2px;height:27px;background:#d4d4d4"></div>
<div class="a" style="left:788px;top:263px;width:2px;height:27px;background:#d4d4d4"></div>
<div class="a" style="left:843px;top:263px;width:2px;height:27px;background:#d4d4d4"></div>
<div class="a" style="left:920px;top:263px;width:2px;height:27px;background:#d4d4d4"></div>
<div class="a" style="left:1335px;top:263px;width:1px;height:27px;background:#d4d4d4"></div>
<div class="t" style="left:21px;top:268px;width:19px;text-align:right;color:#000">8</div>
<svg style="left:46px;top:268px" width="23" height="17"><use href="#fw" width="23" height="17"/></svg>
<div class="t" style="left:72px;top:268px;color:#000">infra</div>
<svg style="left:177px;top:263px" width="25" height="25"><use href="#cubes" width="25" height="25"/></svg>
<div class="t" style="left:205px;top:268px;color:#000">cloudflare dns group</div>
<svg style="left:345px;top:264px" width="25" height="25"><use href="#gears" width="25" height="25"/></svg>
<div class="t" style="left:372px;top:268px;color:#000">DNS</div>
<svg style="left:525px;top:265px" width="26" height="22"><use href="#iface" width="26" height="22"/></svg>
<div class="t" style="left:553px;top:268px;color:#000">inside</div>
<svg style="left:616px;top:263px" width="25" height="27"><use href="#up" width="25" height="27"/></svg>
<div class="t" style="left:644px;top:268px;color:#000">Outbound</div>
<svg style="left:714px;top:264px" width="25" height="25"><use href="#accept" width="25" height="25"/></svg>
<div class="t" style="left:741px;top:268px;color:#000">Accept</div>
<div class="t" style="left:791px;top:268px;color:#000">Any</div>
<div class="a" style="left:20px;top:292px;width:22px;height:27px;background:#f9f8f7;border-left:1px solid #dcdcdc"></div>
<div class="a" style="left:20px;top:290px;width:1316px;height:2px;background:#d4d4d4"></div>
<div class="a" style="left:44px;top:292px;width:1291px;height:27px;background:#fdf6e5"></div>
<div class="a" style="left:42px;top:292px;width:2px;height:27px;background:#d4d4d4"></div>
<div class="a" style="left:175px;top:292px;width:2px;height:27px;background:#d4d4d4"></div>
<div class="a" style="left:342px;top:292px;width:2px;height:27px;background:#d4d4d4"></div>
<div class="a" style="left:523px;top:292px;width:2px;height:27px;background:#d4d4d4"></div>
<div class="a" style="left:614px;top:292px;width:2px;height:27px;background:#d4d4d4"></div>
<div class="a" style="left:711px;top:292px;width:2px;height:27px;background:#d4d4d4"></div>
<div class="a" style="left:788px;top:292px;width:2px;height:27px;background:#d4d4d4"></div>
<div class="a" style="left:843px;top:292px;width:2px;height:27px;background:#d4d4d4"></div>
<div class="a" style="left:920px;top:292px;width:2px;height:27px;background:#d4d4d4"></div>
<div class="a" style="left:1335px;top:292px;width:1px;height:27px;background:#d4d4d4"></div>
<div class="t" style="left:21px;top:297px;width:19px;text-align:right;color:#000">9</div>
<svg style="left:46px;top:297px" width="23" height="17"><use href="#fw" width="23" height="17"/></svg>
<div class="t" style="left:72px;top:297px;color:#000">infra</div>
<div class="t" style="left:178px;top:297px;color:#000">Any</div>
<svg style="left:345px;top:293px" width="25" height="25"><use href="#proto" width="25" height="25"/></svg>
<div class="t b" style="left:345px;top:292px;font-size:12.5px;line-height:12px;color:#18a010;transform:scaleX(0.78);transform-origin:0 0;-webkit-text-stroke:0.3px #18a010;text-shadow:0 0 1px #fff,0 0 1px #fff">UDP</div>
<div class="t" style="left:372px;top:297px;color:#000">NTP 123</div>
<svg style="left:525px;top:294px" width="26" height="22"><use href="#iface" width="26" height="22"/></svg>
<div class="t" style="left:553px;top:297px;color:#000">inside</div>
<svg style="left:616px;top:292px" width="25" height="27"><use href="#up" width="25" height="27"/></svg>
<div class="t" style="left:644px;top:297px;color:#000">Outbound</div>
<svg style="left:714px;top:293px" width="25" height="25"><use href="#accept" width="25" height="25"/></svg>
<div class="t" style="left:741px;top:297px;color:#000">Accept</div>
<div class="t" style="left:791px;top:297px;color:#000">Any</div>
<div class="a" style="left:20px;top:321px;width:22px;height:27px;background:#f9f8f7;border-left:1px solid #dcdcdc"></div>
<div class="a" style="left:20px;top:319px;width:1316px;height:2px;background:#d4d4d4"></div>
<div class="a" style="left:44px;top:321px;width:1291px;height:27px;background:#fdf6e5"></div>
<div class="a" style="left:42px;top:321px;width:2px;height:27px;background:#d4d4d4"></div>
<div class="a" style="left:175px;top:321px;width:2px;height:27px;background:#d4d4d4"></div>
<div class="a" style="left:342px;top:321px;width:2px;height:27px;background:#d4d4d4"></div>
<div class="a" style="left:523px;top:321px;width:2px;height:27px;background:#d4d4d4"></div>
<div class="a" style="left:614px;top:321px;width:2px;height:27px;background:#d4d4d4"></div>
<div class="a" style="left:711px;top:321px;width:2px;height:27px;background:#d4d4d4"></div>
<div class="a" style="left:788px;top:321px;width:2px;height:27px;background:#d4d4d4"></div>
<div class="a" style="left:843px;top:321px;width:2px;height:27px;background:#d4d4d4"></div>
<div class="a" style="left:920px;top:321px;width:2px;height:27px;background:#d4d4d4"></div>
<div class="a" style="left:1335px;top:321px;width:1px;height:27px;background:#d4d4d4"></div>
<div class="t" style="left:21px;top:326px;width:19px;text-align:right;color:#000">10</div>
<svg style="left:46px;top:326px" width="23" height="17"><use href="#fw" width="23" height="17"/></svg>
<div class="t" style="left:72px;top:326px;color:#000">infra</div>
<svg style="left:179px;top:326px" width="23" height="17"><use href="#fw" width="23" height="17"/></svg>
<div class="t" style="left:205px;top:326px;color:#000">infra</div>
<svg style="left:345px;top:322px" width="25" height="25"><use href="#gears" width="25" height="25"/></svg>
<div class="t" style="left:372px;top:326px;color:#000">FreeIPA</div>
<svg style="left:525px;top:323px" width="26" height="22"><use href="#iface" width="26" height="22"/></svg>
<div class="t" style="left:553px;top:326px;color:#000">inside</div>
<svg style="left:616px;top:321px" width="25" height="27"><use href="#up" width="25" height="27"/></svg>
<div class="t" style="left:644px;top:326px;color:#000">Outbound</div>
<svg style="left:714px;top:322px" width="25" height="25"><use href="#accept" width="25" height="25"/></svg>
<div class="t" style="left:741px;top:326px;color:#000">Accept</div>
<div class="t" style="left:791px;top:326px;color:#000">Any</div>
<div class="a" style="left:20px;top:350px;width:22px;height:52px;background:#f9f8f7;border-left:1px solid #dcdcdc"></div>
<div class="a" style="left:20px;top:348px;width:1316px;height:2px;background:#d4d4d4"></div>
<div class="a" style="left:44px;top:350px;width:1291px;height:52px;background:#fdf6e5"></div>
<div class="a" style="left:42px;top:350px;width:2px;height:52px;background:#d4d4d4"></div>
<div class="a" style="left:175px;top:350px;width:2px;height:52px;background:#d4d4d4"></div>
<div class="a" style="left:342px;top:350px;width:2px;height:52px;background:#d4d4d4"></div>
<div class="a" style="left:523px;top:350px;width:2px;height:52px;background:#d4d4d4"></div>
<div class="a" style="left:614px;top:350px;width:2px;height:52px;background:#d4d4d4"></div>
<div class="a" style="left:711px;top:350px;width:2px;height:52px;background:#d4d4d4"></div>
<div class="a" style="left:788px;top:350px;width:2px;height:52px;background:#d4d4d4"></div>
<div class="a" style="left:843px;top:350px;width:2px;height:52px;background:#d4d4d4"></div>
<div class="a" style="left:920px;top:350px;width:2px;height:52px;background:#d4d4d4"></div>
<div class="a" style="left:1335px;top:350px;width:1px;height:52px;background:#d4d4d4"></div>
<div class="t" style="left:21px;top:355px;width:19px;text-align:right;color:#000">11</div>
<svg style="left:46px;top:355px" width="23" height="17"><use href="#fw" width="23" height="17"/></svg>
<div class="t" style="left:72px;top:355px;color:#000">infra</div>
<div class="t" style="left:178px;top:355px;color:#000">Any</div>
<svg style="left:345px;top:351px" width="25" height="25"><use href="#proto" width="25" height="25"/></svg>
<div class="t b" style="left:345px;top:350px;font-size:12.5px;line-height:12px;color:#18a010;transform:scaleX(0.78);transform-origin:0 0;-webkit-text-stroke:0.3px #18a010;text-shadow:0 0 1px #fff,0 0 1px #fff">TCP</div>
<div class="t" style="left:372px;top:355px;color:#000">HTTP 80</div>
<svg style="left:345px;top:376px" width="25" height="25"><use href="#proto" width="25" height="25"/></svg>
<div class="t b" style="left:345px;top:375px;font-size:12.5px;line-height:12px;color:#18a010;transform:scaleX(0.78);transform-origin:0 0;-webkit-text-stroke:0.3px #18a010;text-shadow:0 0 1px #fff,0 0 1px #fff">TCP</div>
<div class="t" style="left:372px;top:380px;color:#000">HTTPS 443</div>
<svg style="left:525px;top:352px" width="26" height="22"><use href="#iface" width="26" height="22"/></svg>
<div class="t" style="left:553px;top:355px;color:#000">inside</div>
<svg style="left:616px;top:350px" width="25" height="27"><use href="#up" width="25" height="27"/></svg>
<div class="t" style="left:644px;top:355px;color:#000">Outbound</div>
<svg style="left:714px;top:351px" width="25" height="25"><use href="#accept" width="25" height="25"/></svg>
<div class="t" style="left:741px;top:355px;color:#000">Accept</div>
<div class="t" style="left:791px;top:355px;color:#000">Any</div>
<div class="t" style="left:923px;top:355px;color:#000">For dnf updates and FreeIPA</div>
<div class="a" style="left:20px;top:404px;width:22px;height:52px;background:#f9f8f7;border-left:1px solid #dcdcdc"></div>
<div class="a" style="left:20px;top:402px;width:1316px;height:2px;background:#d4d4d4"></div>
<div class="a" style="left:44px;top:404px;width:1291px;height:52px;background:#fdf6e5"></div>
<div class="a" style="left:42px;top:404px;width:2px;height:52px;background:#d4d4d4"></div>
<div class="a" style="left:175px;top:404px;width:2px;height:52px;background:#d4d4d4"></div>
<div class="a" style="left:342px;top:404px;width:2px;height:52px;background:#d4d4d4"></div>
<div class="a" style="left:523px;top:404px;width:2px;height:52px;background:#d4d4d4"></div>
<div class="a" style="left:614px;top:404px;width:2px;height:52px;background:#d4d4d4"></div>
<div class="a" style="left:711px;top:404px;width:2px;height:52px;background:#d4d4d4"></div>
<div class="a" style="left:788px;top:404px;width:2px;height:52px;background:#d4d4d4"></div>
<div class="a" style="left:843px;top:404px;width:2px;height:52px;background:#d4d4d4"></div>
<div class="a" style="left:920px;top:404px;width:2px;height:52px;background:#d4d4d4"></div>
<div class="a" style="left:1335px;top:404px;width:1px;height:52px;background:#d4d4d4"></div>
<div class="t" style="left:21px;top:409px;width:19px;text-align:right;color:#000">12</div>
<svg style="left:46px;top:409px" width="23" height="17"><use href="#fw" width="23" height="17"/></svg>
<div class="t" style="left:72px;top:409px;color:#000">infra</div>
<div class="t" style="left:178px;top:409px;color:#000">Any</div>
<svg style="left:345px;top:405px" width="25" height="25"><use href="#proto" width="25" height="25"/></svg>
<div class="t b" style="left:345px;top:404px;font-size:12.5px;line-height:12px;color:#18a010;transform:scaleX(0.78);transform-origin:0 0;-webkit-text-stroke:0.3px #18a010;text-shadow:0 0 1px #fff,0 0 1px #fff">TCP</div>
<div class="t" style="left:372px;top:409px;color:#000">SMTP 25</div>
<svg style="left:345px;top:430px" width="25" height="25"><use href="#proto" width="25" height="25"/></svg>
<div class="t b" style="left:345px;top:429px;font-size:12.5px;line-height:12px;color:#18a010;transform:scaleX(0.78);transform-origin:0 0;-webkit-text-stroke:0.3px #18a010;text-shadow:0 0 1px #fff,0 0 1px #fff">TCP</div>
<div class="t" style="left:372px;top:434px;color:#000">SMTP submission 587</div>
<svg style="left:525px;top:406px" width="26" height="22"><use href="#iface" width="26" height="22"/></svg>
<div class="t" style="left:553px;top:409px;color:#000">inside</div>
<svg style="left:616px;top:404px" width="25" height="27"><use href="#up" width="25" height="27"/></svg>
<div class="t" style="left:644px;top:409px;color:#000">Outbound</div>
<svg style="left:714px;top:405px" width="25" height="25"><use href="#accept" width="25" height="25"/></svg>
<div class="t" style="left:741px;top:409px;color:#000">Accept</div>
<div class="t" style="left:791px;top:409px;color:#000">Any</div>
<div class="a" style="left:20px;top:458px;width:22px;height:27px;background:#f9f8f7;border-left:1px solid #dcdcdc"></div>
<div class="a" style="left:20px;top:456px;width:1316px;height:2px;background:#d4d4d4"></div>
<div class="a" style="left:44px;top:458px;width:1291px;height:27px;background:#fdf6e5"></div>
<div class="a" style="left:42px;top:458px;width:2px;height:27px;background:#d4d4d4"></div>
<div class="a" style="left:175px;top:458px;width:2px;height:27px;background:#d4d4d4"></div>
<div class="a" style="left:342px;top:458px;width:2px;height:27px;background:#d4d4d4"></div>
<div class="a" style="left:523px;top:458px;width:2px;height:27px;background:#d4d4d4"></div>
<div class="a" style="left:614px;top:458px;width:2px;height:27px;background:#d4d4d4"></div>
<div class="a" style="left:711px;top:458px;width:2px;height:27px;background:#d4d4d4"></div>
<div class="a" style="left:788px;top:458px;width:2px;height:27px;background:#d4d4d4"></div>
<div class="a" style="left:843px;top:458px;width:2px;height:27px;background:#d4d4d4"></div>
<div class="a" style="left:920px;top:458px;width:2px;height:27px;background:#d4d4d4"></div>
<div class="a" style="left:1335px;top:458px;width:1px;height:27px;background:#d4d4d4"></div>
<div class="t" style="left:21px;top:463px;width:19px;text-align:right;color:#000">13</div>
<svg style="left:46px;top:463px" width="23" height="17"><use href="#fw" width="23" height="17"/></svg>
<div class="t" style="left:72px;top:463px;color:#000">infra</div>
<div class="t" style="left:178px;top:463px;color:#000">Any</div>
<svg style="left:345px;top:459px" width="25" height="25"><use href="#proto" width="25" height="25"/></svg>
<div class="t b" style="left:345px;top:458px;font-size:12.5px;line-height:12px;color:#18a010;transform:scaleX(0.78);transform-origin:0 0;-webkit-text-stroke:0.3px #18a010;text-shadow:0 0 1px #fff,0 0 1px #fff">ICMP</div>
<div class="t" style="left:372px;top:463px;color:#000">ping request</div>
<svg style="left:525px;top:460px" width="26" height="22"><use href="#iface" width="26" height="22"/></svg>
<div class="t" style="left:553px;top:463px;color:#000">inside</div>
<svg style="left:616px;top:458px" width="25" height="27"><use href="#up" width="25" height="27"/></svg>
<div class="t" style="left:644px;top:463px;color:#000">Outbound</div>
<svg style="left:714px;top:459px" width="25" height="25"><use href="#accept" width="25" height="25"/></svg>
<div class="t" style="left:741px;top:463px;color:#000">Accept</div>
<div class="t" style="left:791px;top:463px;color:#000">Any</div>
<div class="a" style="left:20px;top:487px;width:22px;height:27px;background:#f9f8f7;border-left:1px solid #dcdcdc"></div>
<div class="a" style="left:20px;top:485px;width:1316px;height:2px;background:#d4d4d4"></div>
<div class="a" style="left:44px;top:487px;width:1291px;height:27px;background:#db2f2f"></div>
<div class="a" style="left:42px;top:487px;width:2px;height:27px;background:#d4d4d4"></div>
<div class="a" style="left:175px;top:487px;width:2px;height:27px;background:#d4d4d4"></div>
<div class="a" style="left:342px;top:487px;width:2px;height:27px;background:#d4d4d4"></div>
<div class="a" style="left:523px;top:487px;width:2px;height:27px;background:#d4d4d4"></div>
<div class="a" style="left:614px;top:487px;width:2px;height:27px;background:#d4d4d4"></div>
<div class="a" style="left:711px;top:487px;width:2px;height:27px;background:#d4d4d4"></div>
<div class="a" style="left:788px;top:487px;width:2px;height:27px;background:#d4d4d4"></div>
<div class="a" style="left:843px;top:487px;width:2px;height:27px;background:#d4d4d4"></div>
<div class="a" style="left:920px;top:487px;width:2px;height:27px;background:#d4d4d4"></div>
<div class="a" style="left:1335px;top:487px;width:1px;height:27px;background:#d4d4d4"></div>
<div class="t" style="left:21px;top:492px;width:19px;text-align:right;color:#000">14</div>
<div class="t" style="left:45px;top:492px;color:#ffffff">Any</div>
<div class="t" style="left:178px;top:492px;color:#ffffff">Any</div>
<svg style="left:345px;top:488px" width="25" height="25"><use href="#gears" width="25" height="25"/></svg>
<div class="t" style="left:372px;top:492px;color:#ffffff">DHCP</div>
<div class="t" style="left:526px;top:492px;color:#ffffff">Any</div>
<svg style="left:616px;top:487px" width="27" height="27"><use href="#both" width="27" height="27"/></svg>
<div class="t" style="left:644px;top:492px;color:#ffffff">Both</div>
<svg style="left:714px;top:488px" width="25" height="25"><use href="#deny" width="25" height="25"/></svg>
<div class="t" style="left:741px;top:492px;color:#ffffff">Deny</div>
<div class="t" style="left:791px;top:492px;color:#ffffff">Any</div>
<div class="t" style="left:923px;top:492px;color:#ffffff">Services that should be blocked and excluded from logging</div>
<div class="a" style="left:20px;top:516px;width:22px;height:27px;background:#f9f8f7;border-left:1px solid #dcdcdc"></div>
<div class="a" style="left:20px;top:514px;width:1316px;height:2px;background:#d4d4d4"></div>
<div class="a" style="left:44px;top:516px;width:1291px;height:27px;background:#db2f2f"></div>
<div class="a" style="left:42px;top:516px;width:2px;height:27px;background:#d4d4d4"></div>
<div class="a" style="left:175px;top:516px;width:2px;height:27px;background:#d4d4d4"></div>
<div class="a" style="left:342px;top:516px;width:2px;height:27px;background:#d4d4d4"></div>
<div class="a" style="left:523px;top:516px;width:2px;height:27px;background:#d4d4d4"></div>
<div class="a" style="left:614px;top:516px;width:2px;height:27px;background:#d4d4d4"></div>
<div class="a" style="left:711px;top:516px;width:2px;height:27px;background:#d4d4d4"></div>
<div class="a" style="left:788px;top:516px;width:2px;height:27px;background:#d4d4d4"></div>
<div class="a" style="left:843px;top:516px;width:2px;height:27px;background:#d4d4d4"></div>
<div class="a" style="left:920px;top:516px;width:2px;height:27px;background:#d4d4d4"></div>
<div class="a" style="left:1335px;top:516px;width:1px;height:27px;background:#d4d4d4"></div>
<div class="t" style="left:21px;top:521px;width:19px;text-align:right;color:#000">15</div>
<div class="t" style="left:45px;top:521px;color:#ffffff">Any</div>
<svg style="left:179px;top:521px" width="23" height="17"><use href="#fw" width="23" height="17"/></svg>
<div class="t" style="left:205px;top:521px;color:#ffffff">infra</div>
<div class="t" style="left:345px;top:521px;color:#ffffff">Any</div>
<div class="t" style="left:526px;top:521px;color:#ffffff">Any</div>
<svg style="left:616px;top:516px" width="25" height="27"><use href="#down" width="25" height="27"/></svg>
<div class="t" style="left:644px;top:521px;color:#ffffff">Inbound</div>
<svg style="left:714px;top:517px" width="25" height="25"><use href="#deny" width="25" height="25"/></svg>
<div class="t" style="left:741px;top:521px;color:#ffffff">Deny</div>
<div class="t" style="left:791px;top:521px;color:#ffffff">Any</div>
<svg style="left:845px;top:516px" width="26" height="27"><use href="#log" width="26" height="27"/></svg>
<div class="t" style="left:873px;top:521px;color:#ffffff">log</div>
<div class="a" style="left:20px;top:545px;width:22px;height:27px;background:#f9f8f7;border-left:1px solid #dcdcdc"></div>
<div class="a" style="left:20px;top:543px;width:1316px;height:2px;background:#d4d4d4"></div>
<div class="a" style="left:44px;top:545px;width:1291px;height:27px;background:#db2f2f"></div>
<div class="a" style="left:42px;top:545px;width:2px;height:27px;background:#d4d4d4"></div>
<div class="a" style="left:175px;top:545px;width:2px;height:27px;background:#d4d4d4"></div>
<div class="a" style="left:342px;top:545px;width:2px;height:27px;background:#d4d4d4"></div>
<div class="a" style="left:523px;top:545px;width:2px;height:27px;background:#d4d4d4"></div>
<div class="a" style="left:614px;top:545px;width:2px;height:27px;background:#d4d4d4"></div>
<div class="a" style="left:711px;top:545px;width:2px;height:27px;background:#d4d4d4"></div>
<div class="a" style="left:788px;top:545px;width:2px;height:27px;background:#d4d4d4"></div>
<div class="a" style="left:843px;top:545px;width:2px;height:27px;background:#d4d4d4"></div>
<div class="a" style="left:920px;top:545px;width:2px;height:27px;background:#d4d4d4"></div>
<div class="a" style="left:1335px;top:545px;width:1px;height:27px;background:#d4d4d4"></div>
<div class="t" style="left:21px;top:550px;width:19px;text-align:right;color:#000">16</div>
<svg style="left:46px;top:550px" width="23" height="17"><use href="#fw" width="23" height="17"/></svg>
<div class="t" style="left:72px;top:550px;color:#ffffff">infra</div>
<div class="t" style="left:178px;top:550px;color:#ffffff">Any</div>
<div class="t" style="left:345px;top:550px;color:#ffffff">Any</div>
<div class="t" style="left:526px;top:550px;color:#ffffff">Any</div>
<svg style="left:616px;top:545px" width="25" height="27"><use href="#up" width="25" height="27"/></svg>
<div class="t" style="left:644px;top:550px;color:#ffffff">Outbound</div>
<svg style="left:714px;top:546px" width="25" height="25"><use href="#deny" width="25" height="25"/></svg>
<div class="t" style="left:741px;top:550px;color:#ffffff">Deny</div>
<div class="t" style="left:791px;top:550px;color:#ffffff">Any</div>
<svg style="left:845px;top:545px" width="26" height="27"><use href="#log" width="26" height="27"/></svg>
<div class="t" style="left:873px;top:550px;color:#ffffff">log</div>
<div class="a" style="left:20px;top:574px;width:22px;height:27px;background:#f9f8f7;border-left:1px solid #dcdcdc"></div>
<div class="a" style="left:20px;top:572px;width:1316px;height:2px;background:#d4d4d4"></div>
<div class="a" style="left:44px;top:574px;width:1291px;height:27px;background:#db2f2f"></div>
<div class="a" style="left:42px;top:574px;width:2px;height:27px;background:#d4d4d4"></div>
<div class="a" style="left:175px;top:574px;width:2px;height:27px;background:#d4d4d4"></div>
<div class="a" style="left:342px;top:574px;width:2px;height:27px;background:#d4d4d4"></div>
<div class="a" style="left:523px;top:574px;width:2px;height:27px;background:#d4d4d4"></div>
<div class="a" style="left:614px;top:574px;width:2px;height:27px;background:#d4d4d4"></div>
<div class="a" style="left:711px;top:574px;width:2px;height:27px;background:#d4d4d4"></div>
<div class="a" style="left:788px;top:574px;width:2px;height:27px;background:#d4d4d4"></div>
<div class="a" style="left:843px;top:574px;width:2px;height:27px;background:#d4d4d4"></div>
<div class="a" style="left:920px;top:574px;width:2px;height:27px;background:#d4d4d4"></div>
<div class="a" style="left:1335px;top:574px;width:1px;height:27px;background:#d4d4d4"></div>
<div class="t" style="left:21px;top:579px;width:19px;text-align:right;color:#000">17</div>
<div class="t" style="left:45px;top:579px;color:#ffffff">Any</div>
<div class="t" style="left:178px;top:579px;color:#ffffff">Any</div>
<div class="t" style="left:345px;top:579px;color:#ffffff">Any</div>
<div class="t" style="left:526px;top:579px;color:#ffffff">Any</div>
<svg style="left:616px;top:574px" width="27" height="27"><use href="#both" width="27" height="27"/></svg>
<div class="t" style="left:644px;top:579px;color:#ffffff">Both</div>
<svg style="left:714px;top:575px" width="25" height="25"><use href="#deny" width="25" height="25"/></svg>
<div class="t" style="left:741px;top:579px;color:#ffffff">Deny</div>
<div class="t" style="left:791px;top:579px;color:#ffffff">Any</div>
<svg style="left:845px;top:574px" width="26" height="27"><use href="#log" width="26" height="27"/></svg>
<div class="t" style="left:873px;top:579px;color:#ffffff">log</div>
<div class="a" style="left:20px;top:601px;width:1316px;height:1px;background:#d4d4d4"></div>
</div>
<div class="a" style="left:859px;top:805px;width:16px;height:1px;background-image:linear-gradient(90deg,#aaa 1px,transparent 1px);background-size:3px 1px"></div>
<div class="t " style="left:15px;top:810px;">[/home/markusfrei/git/linuxfabrik/github/firewallfabrik/examples/vdc.fwf] / User / Firewalls / infra</div>
<svg style="left:1686px;top:813px" width="10" height="10"><rect x="0.5" y="0.5" width="9" height="9" rx="1" fill="#e4e4e4" stroke="#aaa"/><rect x="3" y="2.5" width="4.5" height="5" fill="none" stroke="#555" stroke-width="0.8"/></svg>
<svg style="left:1705px;top:813px" width="10" height="10"><rect x="0.5" y="0.5" width="9" height="9" rx="1.5" fill="none" stroke="#bbb"/><path d="M2.2 2.2 L7.8 7.8 M7.8 2.2 L2.2 7.8" stroke="#555" stroke-width="1"/></svg>
<div class="a" style="left:378px;top:461px;width:1px;height:17px;background-image:linear-gradient(180deg,#aaa 1px,transparent 1px);background-size:1px 3px"></div>
<div class="a" style="left:13px;top:830px;width:1705px;height:263px;border:1px solid #b8b8b6;background:#fff"></div>
<div class="a" style="left:121px;top:841px;width:1575px;height:240px;border:1px solid #d4d4d4;background:#fff"></div>
<div class="a" style="left:132px;top:852px;width:399px;height:218px;border:1px solid #d4d4d4;background:#fff"></div>
<svg style="left:37px;top:855px" width="58" height="43"><use href="#fw" width="58" height="43"/></svg>
<div class="t " style="left:143px;top:865px;">Name:</div>
<div class="a" style="left:211px;top:864px;width:163px;height:21px;background:#f8f7f6;border-radius:4px"></div>
<div class="t " style="left:217px;top:866px;">infra</div>
<div class="t " style="left:143px;top:892px;">Platform:</div>
<div class="t " style="left:143px;top:919px;">Version:</div>
<div class="t " style="left:143px;top:945px;">Host OS:</div>
<div class="a" style="left:211px;top:892px;width:163px;height:23px;background:#f8f7f6;border-radius:4px"></div>
<div class="a" style="left:358px;top:891px;width:16px;height:24px;border-right:1px solid #2a2a2a;border-bottom:1px solid #2a2a2a;border-left:1px solid #f4f4f2;background:#f9f8f7"></div>
<svg style="left:362px;top:900px" width="8" height="5"><use href="#tri_d" width="8" height="5"/></svg>
<div class="t " style="left:215px;top:894px;">iptables</div>
<div class="a" style="left:211px;top:919px;width:163px;height:23px;background:#f8f7f6;border-radius:4px"></div>
<div class="a" style="left:358px;top:918px;width:16px;height:24px;border-right:1px solid #2a2a2a;border-bottom:1px solid #2a2a2a;border-left:1px solid #f4f4f2;background:#f9f8f7"></div>
<svg style="left:362px;top:927px" width="8" height="5"><use href="#tri_d" width="8" height="5"/></svg>
<div class="a" style="left:211px;top:946px;width:163px;height:23px;background:#f8f7f6;border-radius:4px"></div>
<div class="a" style="left:358px;top:945px;width:16px;height:24px;border-right:1px solid #2a2a2a;border-bottom:1px solid #2a2a2a;border-left:1px solid #f4f4f2;background:#f9f8f7"></div>
<svg style="left:362px;top:954px" width="8" height="5"><use href="#tri_d" width="8" height="5"/></svg>
<div class="t " style="left:215px;top:948px;">Linux</div>
<div class="a" style="left:381px;top:890px;width:140px;height:21px;border:1px solid #c4c4c4;border-radius:3px;background:#fafafa"></div>
<div class="t " style="left:385px;top:892px;">Platform Settings ...</div>
<div class="a" style="left:381px;top:944px;width:140px;height:21px;border:1px solid #c4c4c4;border-radius:3px;background:#fafafa"></div>
<div class="t " style="left:385px;top:945px;">Host OS Settings ...</div>
<div class="a" style="left:210px;top:973px;width:14px;height:14px;border:1px solid #c8c8c8;border-radius:1px;background:#f6f6f5"></div>
<div class="t " style="left:229px;top:972px;">Inactive firewall</div>
<div class="t " style="left:143px;top:997px;">Modified:</div>
<div class="t " style="left:217px;top:997px;">2026-02-24 16:03:50</div>
<div class="t " style="left:143px;top:1020px;">Compiled:</div>
<div class="t " style="left:217px;top:1020px;">2026-02-17 19:33:19</div>
<div class="t " style="left:143px;top:1043px;">Installed:</div>
<div class="t " style="left:217px;top:1043px;">-</div>
<div class="a" style="left:543px;top:855px;width:1137px;height:182px;background:#f7f6f5"></div>
<div class="t " style="left:547px;top:859px;color:#8a8a8a">Enter comment here</div>
<div class="a" style="left:538px;top:1046px;width:80px;height:25px;border:1px solid #c4c4c4;border-radius:3px;background:#f8f8f8"></div>
<div class="t " style="left:556px;top:1050px;">Tags...</div>
<div class="t " style="left:624px;top:1050px;">internal</div>
<div class="t " style="left:25px;top:1097px;">Editor</div>
<div class="t " style="left:89px;top:1097px;">Find</div>
<div class="t " style="left:143px;top:1097px;">Where Used</div>
<div class="t " style="left:251px;top:1097px;">Output</div>
<div class="a" style="left:13px;top:1120px;width:64px;height:2px;background:#3584e4"></div>
</div></body></html>
